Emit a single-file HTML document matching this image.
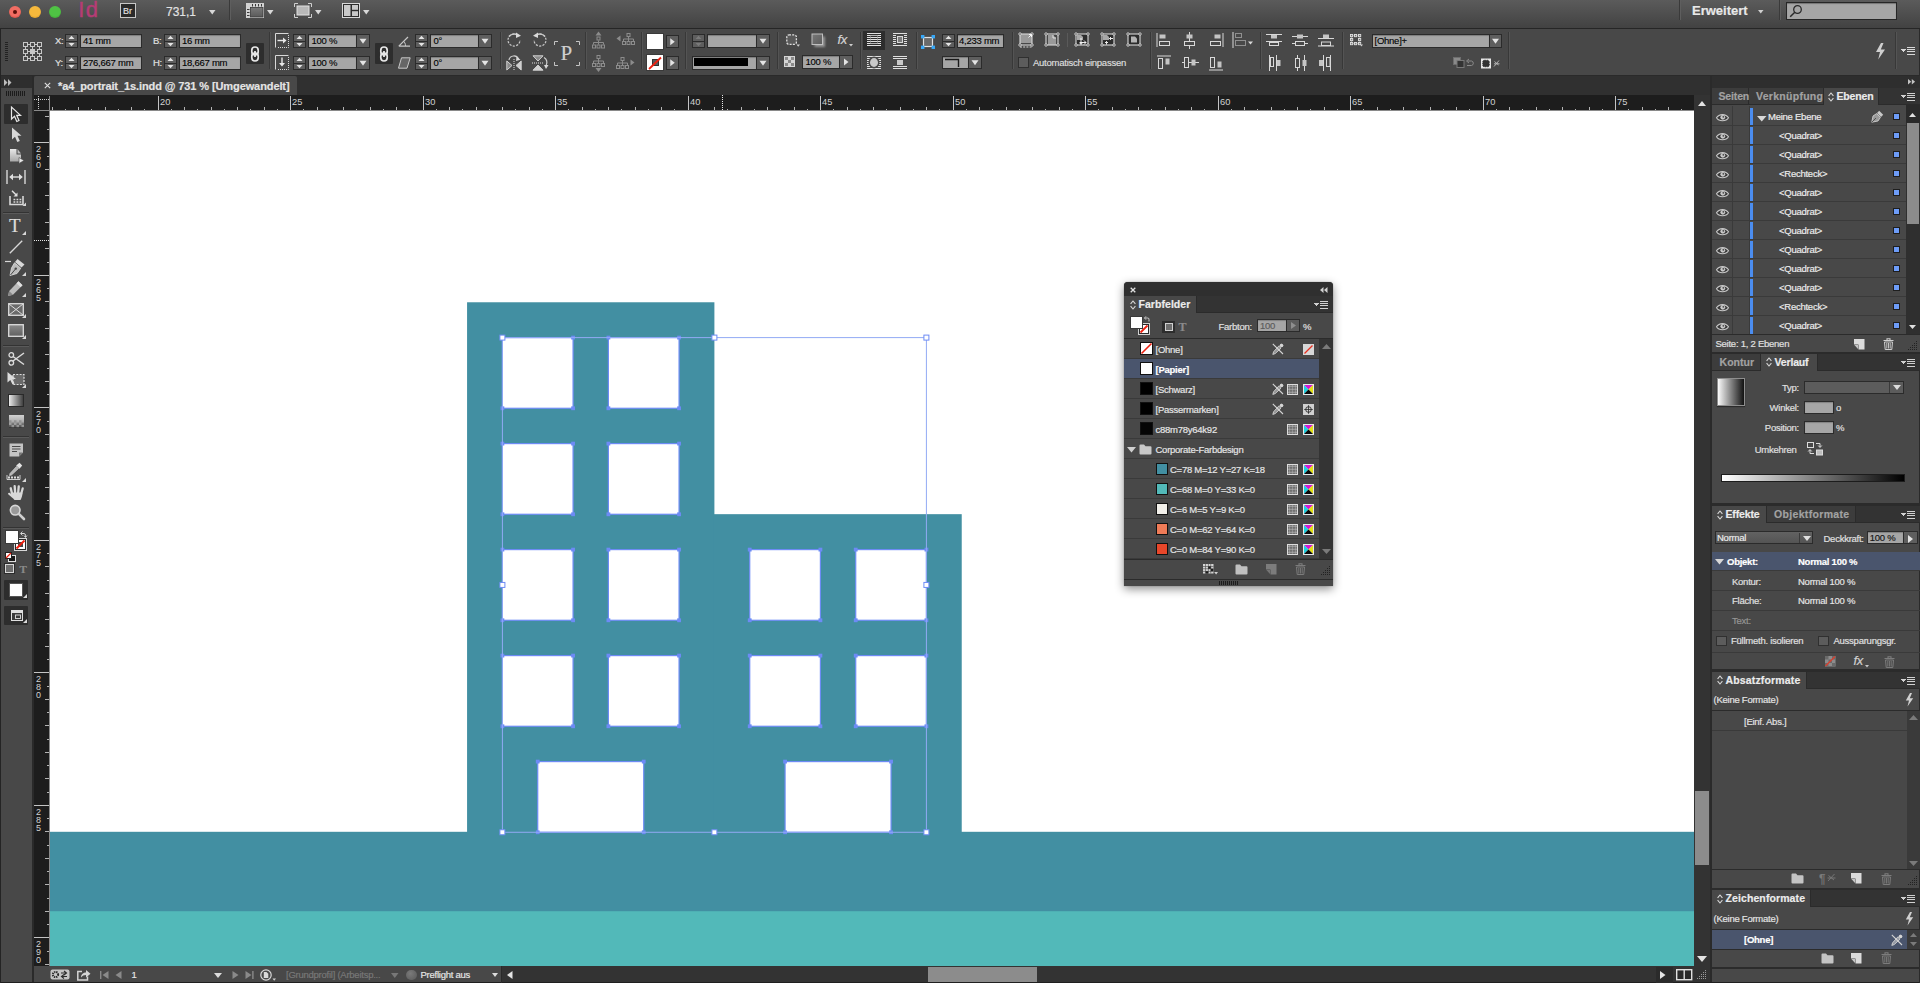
<!DOCTYPE html><html><head><meta charset="utf-8"><title>InDesign</title><style>
*{box-sizing:border-box;margin:0;padding:0}
html,body{width:1920px;height:983px;overflow:hidden;background:#484848}
body{position:relative;font-family:"Liberation Sans",sans-serif;font-size:10px;color:#dcdcdc}
div,svg{position:absolute}
.t{white-space:nowrap;-webkit-text-stroke:0.18px currentColor}
svg{overflow:visible}
</style></head><body><div style="left:0px;top:0px;width:1920px;height:28px;background:linear-gradient(#5b5b5b,#424242);"></div>
<div style="left:0px;top:28px;width:1920px;height:1px;background:#262626;"></div>
<div style="left:0px;top:29px;width:1920px;height:46px;background:#484848;"></div>
<div style="left:0px;top:75px;width:1920px;height:1px;background:#2a2a2a;"></div>
<div style="left:0px;top:76px;width:1920px;height:19px;background:#303030;"></div>
<div style="left:34px;top:76px;width:263px;height:19px;background:#484848;border-radius:2px 2px 0 0;"></div>
<div style="left:0px;top:76px;width:32px;height:12px;background:#2e2e2e;"></div>
<div style="left:0px;top:88px;width:32px;height:895px;background:#484848;"></div>
<div style="left:32px;top:76px;width:2px;height:907px;background:#2a2a2a;"></div>
<div style="left:50px;top:111px;width:1644px;height:855px;background:#fff;"></div><svg style="left:0;top:0" width="1920" height="983" viewBox="0 0 1920 983" shape-rendering="auto"><rect x="50" y="831.8" width="1644" height="134.2" fill="#428fa2"/><rect x="50" y="911.2" width="1644" height="54.8" fill="#52b9b9"/><rect x="467.07" y="302.27" width="247.33" height="530.73" fill="#428fa2"/><rect x="713.40" y="514.17" width="248.33" height="318.83" fill="#428fa2"/><rect x="502.40" y="337.60" width="70.67" height="70.67" fill="#fff" stroke="#6d8bf5" stroke-width="1.2"/><rect x="500.50" y="335.70" width="3.8" height="3.8" fill="#6d8bf5"/><rect x="571.17" y="335.70" width="3.8" height="3.8" fill="#6d8bf5"/><rect x="500.50" y="406.37" width="3.8" height="3.8" fill="#6d8bf5"/><rect x="571.17" y="406.37" width="3.8" height="3.8" fill="#6d8bf5"/><rect x="608.40" y="337.60" width="70.67" height="70.67" fill="#fff" stroke="#6d8bf5" stroke-width="1.2"/><rect x="606.50" y="335.70" width="3.8" height="3.8" fill="#6d8bf5"/><rect x="677.17" y="335.70" width="3.8" height="3.8" fill="#6d8bf5"/><rect x="606.50" y="406.37" width="3.8" height="3.8" fill="#6d8bf5"/><rect x="677.17" y="406.37" width="3.8" height="3.8" fill="#6d8bf5"/><rect x="502.40" y="443.60" width="70.67" height="70.67" fill="#fff" stroke="#6d8bf5" stroke-width="1.2"/><rect x="500.50" y="441.70" width="3.8" height="3.8" fill="#6d8bf5"/><rect x="571.17" y="441.70" width="3.8" height="3.8" fill="#6d8bf5"/><rect x="500.50" y="512.37" width="3.8" height="3.8" fill="#6d8bf5"/><rect x="571.17" y="512.37" width="3.8" height="3.8" fill="#6d8bf5"/><rect x="608.40" y="443.60" width="70.67" height="70.67" fill="#fff" stroke="#6d8bf5" stroke-width="1.2"/><rect x="606.50" y="441.70" width="3.8" height="3.8" fill="#6d8bf5"/><rect x="677.17" y="441.70" width="3.8" height="3.8" fill="#6d8bf5"/><rect x="606.50" y="512.37" width="3.8" height="3.8" fill="#6d8bf5"/><rect x="677.17" y="512.37" width="3.8" height="3.8" fill="#6d8bf5"/><rect x="502.40" y="549.60" width="70.67" height="70.67" fill="#fff" stroke="#6d8bf5" stroke-width="1.2"/><rect x="500.50" y="547.70" width="3.8" height="3.8" fill="#6d8bf5"/><rect x="571.17" y="547.70" width="3.8" height="3.8" fill="#6d8bf5"/><rect x="500.50" y="618.37" width="3.8" height="3.8" fill="#6d8bf5"/><rect x="571.17" y="618.37" width="3.8" height="3.8" fill="#6d8bf5"/><rect x="608.40" y="549.60" width="70.67" height="70.67" fill="#fff" stroke="#6d8bf5" stroke-width="1.2"/><rect x="606.50" y="547.70" width="3.8" height="3.8" fill="#6d8bf5"/><rect x="677.17" y="547.70" width="3.8" height="3.8" fill="#6d8bf5"/><rect x="606.50" y="618.37" width="3.8" height="3.8" fill="#6d8bf5"/><rect x="677.17" y="618.37" width="3.8" height="3.8" fill="#6d8bf5"/><rect x="502.40" y="655.60" width="70.67" height="70.67" fill="#fff" stroke="#6d8bf5" stroke-width="1.2"/><rect x="500.50" y="653.70" width="3.8" height="3.8" fill="#6d8bf5"/><rect x="571.17" y="653.70" width="3.8" height="3.8" fill="#6d8bf5"/><rect x="500.50" y="724.37" width="3.8" height="3.8" fill="#6d8bf5"/><rect x="571.17" y="724.37" width="3.8" height="3.8" fill="#6d8bf5"/><rect x="608.40" y="655.60" width="70.67" height="70.67" fill="#fff" stroke="#6d8bf5" stroke-width="1.2"/><rect x="606.50" y="653.70" width="3.8" height="3.8" fill="#6d8bf5"/><rect x="677.17" y="653.70" width="3.8" height="3.8" fill="#6d8bf5"/><rect x="606.50" y="724.37" width="3.8" height="3.8" fill="#6d8bf5"/><rect x="677.17" y="724.37" width="3.8" height="3.8" fill="#6d8bf5"/><rect x="749.73" y="549.60" width="70.67" height="70.67" fill="#fff" stroke="#6d8bf5" stroke-width="1.2"/><rect x="747.83" y="547.70" width="3.8" height="3.8" fill="#6d8bf5"/><rect x="818.50" y="547.70" width="3.8" height="3.8" fill="#6d8bf5"/><rect x="747.83" y="618.37" width="3.8" height="3.8" fill="#6d8bf5"/><rect x="818.50" y="618.37" width="3.8" height="3.8" fill="#6d8bf5"/><rect x="855.73" y="549.60" width="70.67" height="70.67" fill="#fff" stroke="#6d8bf5" stroke-width="1.2"/><rect x="853.83" y="547.70" width="3.8" height="3.8" fill="#6d8bf5"/><rect x="924.50" y="547.70" width="3.8" height="3.8" fill="#6d8bf5"/><rect x="853.83" y="618.37" width="3.8" height="3.8" fill="#6d8bf5"/><rect x="924.50" y="618.37" width="3.8" height="3.8" fill="#6d8bf5"/><rect x="749.73" y="655.60" width="70.67" height="70.67" fill="#fff" stroke="#6d8bf5" stroke-width="1.2"/><rect x="747.83" y="653.70" width="3.8" height="3.8" fill="#6d8bf5"/><rect x="818.50" y="653.70" width="3.8" height="3.8" fill="#6d8bf5"/><rect x="747.83" y="724.37" width="3.8" height="3.8" fill="#6d8bf5"/><rect x="818.50" y="724.37" width="3.8" height="3.8" fill="#6d8bf5"/><rect x="855.73" y="655.60" width="70.67" height="70.67" fill="#fff" stroke="#6d8bf5" stroke-width="1.2"/><rect x="853.83" y="653.70" width="3.8" height="3.8" fill="#6d8bf5"/><rect x="924.50" y="653.70" width="3.8" height="3.8" fill="#6d8bf5"/><rect x="853.83" y="724.37" width="3.8" height="3.8" fill="#6d8bf5"/><rect x="924.50" y="724.37" width="3.8" height="3.8" fill="#6d8bf5"/><rect x="537.73" y="761.60" width="106.00" height="70.67" fill="#fff" stroke="#6d8bf5" stroke-width="1.2"/><rect x="535.83" y="759.70" width="3.8" height="3.8" fill="#6d8bf5"/><rect x="641.83" y="759.70" width="3.8" height="3.8" fill="#6d8bf5"/><rect x="535.83" y="830.37" width="3.8" height="3.8" fill="#6d8bf5"/><rect x="641.83" y="830.37" width="3.8" height="3.8" fill="#6d8bf5"/><rect x="785.07" y="761.60" width="106.00" height="70.67" fill="#fff" stroke="#6d8bf5" stroke-width="1.2"/><rect x="783.17" y="759.70" width="3.8" height="3.8" fill="#6d8bf5"/><rect x="889.17" y="759.70" width="3.8" height="3.8" fill="#6d8bf5"/><rect x="783.17" y="830.37" width="3.8" height="3.8" fill="#6d8bf5"/><rect x="889.17" y="830.37" width="3.8" height="3.8" fill="#6d8bf5"/><rect x="502.40" y="337.60" width="424.00" height="494.67" fill="none" stroke="#92aaf4" stroke-width="1"/><rect x="499.90" y="335.10" width="5" height="5" fill="#fff" stroke="#6d8bf5" stroke-width="1"/><rect x="499.90" y="582.43" width="5" height="5" fill="#fff" stroke="#6d8bf5" stroke-width="1"/><rect x="499.90" y="829.77" width="5" height="5" fill="#fff" stroke="#6d8bf5" stroke-width="1"/><rect x="711.90" y="335.10" width="5" height="5" fill="#fff" stroke="#6d8bf5" stroke-width="1"/><rect x="711.90" y="829.77" width="5" height="5" fill="#fff" stroke="#6d8bf5" stroke-width="1"/><rect x="923.90" y="335.10" width="5" height="5" fill="#fff" stroke="#6d8bf5" stroke-width="1"/><rect x="923.90" y="582.43" width="5" height="5" fill="#fff" stroke="#6d8bf5" stroke-width="1"/><rect x="923.90" y="829.77" width="5" height="5" fill="#fff" stroke="#6d8bf5" stroke-width="1"/></svg>
<div style="left:34px;top:95px;width:1660px;height:16px;background:#1d1d1d;"></div><div style="left:34px;top:111px;width:16px;height:855px;background:#1d1d1d;"></div><svg style="left:0;top:0" width="1920" height="983" viewBox="0 0 1920 983" shape-rendering="crispEdges"><rect x="51.5" y="107" width="1" height="4" fill="#b4b4b4"/><rect x="64.5" y="109" width="1" height="2" fill="#b4b4b4"/><rect x="77.5" y="107" width="1" height="4" fill="#b4b4b4"/><rect x="90.5" y="109" width="1" height="2" fill="#b4b4b4"/><rect x="104.5" y="107" width="1" height="4" fill="#b4b4b4"/><rect x="117.5" y="109" width="1" height="2" fill="#b4b4b4"/><rect x="130.5" y="107" width="1" height="4" fill="#b4b4b4"/><rect x="143.5" y="109" width="1" height="2" fill="#b4b4b4"/><rect x="157.5" y="96" width="1" height="15" fill="#c4c4c4"/><text x="160" y="104.8" font-size="9.3" fill="#d2d2d2" font-family='"Liberation Sans", sans-serif'>20</text><rect x="170.5" y="109" width="1" height="2" fill="#b4b4b4"/><rect x="183.5" y="107" width="1" height="4" fill="#b4b4b4"/><rect x="196.5" y="109" width="1" height="2" fill="#b4b4b4"/><rect x="210.5" y="107" width="1" height="4" fill="#b4b4b4"/><rect x="223.5" y="109" width="1" height="2" fill="#b4b4b4"/><rect x="236.5" y="107" width="1" height="4" fill="#b4b4b4"/><rect x="249.5" y="109" width="1" height="2" fill="#b4b4b4"/><rect x="263.5" y="107" width="1" height="4" fill="#b4b4b4"/><rect x="276.5" y="109" width="1" height="2" fill="#b4b4b4"/><rect x="289.5" y="96" width="1" height="15" fill="#c4c4c4"/><text x="292" y="104.8" font-size="9.3" fill="#d2d2d2" font-family='"Liberation Sans", sans-serif'>25</text><rect x="302.5" y="109" width="1" height="2" fill="#b4b4b4"/><rect x="316.5" y="107" width="1" height="4" fill="#b4b4b4"/><rect x="329.5" y="109" width="1" height="2" fill="#b4b4b4"/><rect x="342.5" y="107" width="1" height="4" fill="#b4b4b4"/><rect x="355.5" y="109" width="1" height="2" fill="#b4b4b4"/><rect x="369.5" y="107" width="1" height="4" fill="#b4b4b4"/><rect x="382.5" y="109" width="1" height="2" fill="#b4b4b4"/><rect x="395.5" y="107" width="1" height="4" fill="#b4b4b4"/><rect x="408.5" y="109" width="1" height="2" fill="#b4b4b4"/><rect x="422.5" y="96" width="1" height="15" fill="#c4c4c4"/><text x="425" y="104.8" font-size="9.3" fill="#d2d2d2" font-family='"Liberation Sans", sans-serif'>30</text><rect x="435.5" y="109" width="1" height="2" fill="#b4b4b4"/><rect x="448.5" y="107" width="1" height="4" fill="#b4b4b4"/><rect x="461.5" y="109" width="1" height="2" fill="#b4b4b4"/><rect x="475.5" y="107" width="1" height="4" fill="#b4b4b4"/><rect x="488.5" y="109" width="1" height="2" fill="#b4b4b4"/><rect x="501.5" y="107" width="1" height="4" fill="#b4b4b4"/><rect x="514.5" y="109" width="1" height="2" fill="#b4b4b4"/><rect x="528.5" y="107" width="1" height="4" fill="#b4b4b4"/><rect x="541.5" y="109" width="1" height="2" fill="#b4b4b4"/><rect x="554.5" y="96" width="1" height="15" fill="#c4c4c4"/><text x="557" y="104.8" font-size="9.3" fill="#d2d2d2" font-family='"Liberation Sans", sans-serif'>35</text><rect x="567.5" y="109" width="1" height="2" fill="#b4b4b4"/><rect x="581.5" y="107" width="1" height="4" fill="#b4b4b4"/><rect x="594.5" y="109" width="1" height="2" fill="#b4b4b4"/><rect x="607.5" y="107" width="1" height="4" fill="#b4b4b4"/><rect x="620.5" y="109" width="1" height="2" fill="#b4b4b4"/><rect x="634.5" y="107" width="1" height="4" fill="#b4b4b4"/><rect x="647.5" y="109" width="1" height="2" fill="#b4b4b4"/><rect x="660.5" y="107" width="1" height="4" fill="#b4b4b4"/><rect x="673.5" y="109" width="1" height="2" fill="#b4b4b4"/><rect x="687.5" y="96" width="1" height="15" fill="#c4c4c4"/><text x="690" y="104.8" font-size="9.3" fill="#d2d2d2" font-family='"Liberation Sans", sans-serif'>40</text><rect x="700.5" y="109" width="1" height="2" fill="#b4b4b4"/><rect x="713.5" y="107" width="1" height="4" fill="#b4b4b4"/><rect x="726.5" y="109" width="1" height="2" fill="#b4b4b4"/><rect x="740.5" y="107" width="1" height="4" fill="#b4b4b4"/><rect x="753.5" y="109" width="1" height="2" fill="#b4b4b4"/><rect x="766.5" y="107" width="1" height="4" fill="#b4b4b4"/><rect x="779.5" y="109" width="1" height="2" fill="#b4b4b4"/><rect x="793.5" y="107" width="1" height="4" fill="#b4b4b4"/><rect x="806.5" y="109" width="1" height="2" fill="#b4b4b4"/><rect x="819.5" y="96" width="1" height="15" fill="#c4c4c4"/><text x="822" y="104.8" font-size="9.3" fill="#d2d2d2" font-family='"Liberation Sans", sans-serif'>45</text><rect x="832.5" y="109" width="1" height="2" fill="#b4b4b4"/><rect x="846.5" y="107" width="1" height="4" fill="#b4b4b4"/><rect x="859.5" y="109" width="1" height="2" fill="#b4b4b4"/><rect x="872.5" y="107" width="1" height="4" fill="#b4b4b4"/><rect x="885.5" y="109" width="1" height="2" fill="#b4b4b4"/><rect x="899.5" y="107" width="1" height="4" fill="#b4b4b4"/><rect x="912.5" y="109" width="1" height="2" fill="#b4b4b4"/><rect x="925.5" y="107" width="1" height="4" fill="#b4b4b4"/><rect x="938.5" y="109" width="1" height="2" fill="#b4b4b4"/><rect x="952.5" y="96" width="1" height="15" fill="#c4c4c4"/><text x="955" y="104.8" font-size="9.3" fill="#d2d2d2" font-family='"Liberation Sans", sans-serif'>50</text><rect x="965.5" y="109" width="1" height="2" fill="#b4b4b4"/><rect x="978.5" y="107" width="1" height="4" fill="#b4b4b4"/><rect x="991.5" y="109" width="1" height="2" fill="#b4b4b4"/><rect x="1005.5" y="107" width="1" height="4" fill="#b4b4b4"/><rect x="1018.5" y="109" width="1" height="2" fill="#b4b4b4"/><rect x="1031.5" y="107" width="1" height="4" fill="#b4b4b4"/><rect x="1044.5" y="109" width="1" height="2" fill="#b4b4b4"/><rect x="1058.5" y="107" width="1" height="4" fill="#b4b4b4"/><rect x="1071.5" y="109" width="1" height="2" fill="#b4b4b4"/><rect x="1084.5" y="96" width="1" height="15" fill="#c4c4c4"/><text x="1087" y="104.8" font-size="9.3" fill="#d2d2d2" font-family='"Liberation Sans", sans-serif'>55</text><rect x="1097.5" y="109" width="1" height="2" fill="#b4b4b4"/><rect x="1111.5" y="107" width="1" height="4" fill="#b4b4b4"/><rect x="1124.5" y="109" width="1" height="2" fill="#b4b4b4"/><rect x="1137.5" y="107" width="1" height="4" fill="#b4b4b4"/><rect x="1150.5" y="109" width="1" height="2" fill="#b4b4b4"/><rect x="1164.5" y="107" width="1" height="4" fill="#b4b4b4"/><rect x="1177.5" y="109" width="1" height="2" fill="#b4b4b4"/><rect x="1190.5" y="107" width="1" height="4" fill="#b4b4b4"/><rect x="1203.5" y="109" width="1" height="2" fill="#b4b4b4"/><rect x="1217.5" y="96" width="1" height="15" fill="#c4c4c4"/><text x="1220" y="104.8" font-size="9.3" fill="#d2d2d2" font-family='"Liberation Sans", sans-serif'>60</text><rect x="1230.5" y="109" width="1" height="2" fill="#b4b4b4"/><rect x="1243.5" y="107" width="1" height="4" fill="#b4b4b4"/><rect x="1256.5" y="109" width="1" height="2" fill="#b4b4b4"/><rect x="1270.5" y="107" width="1" height="4" fill="#b4b4b4"/><rect x="1283.5" y="109" width="1" height="2" fill="#b4b4b4"/><rect x="1296.5" y="107" width="1" height="4" fill="#b4b4b4"/><rect x="1309.5" y="109" width="1" height="2" fill="#b4b4b4"/><rect x="1323.5" y="107" width="1" height="4" fill="#b4b4b4"/><rect x="1336.5" y="109" width="1" height="2" fill="#b4b4b4"/><rect x="1349.5" y="96" width="1" height="15" fill="#c4c4c4"/><text x="1352" y="104.8" font-size="9.3" fill="#d2d2d2" font-family='"Liberation Sans", sans-serif'>65</text><rect x="1362.5" y="109" width="1" height="2" fill="#b4b4b4"/><rect x="1376.5" y="107" width="1" height="4" fill="#b4b4b4"/><rect x="1389.5" y="109" width="1" height="2" fill="#b4b4b4"/><rect x="1402.5" y="107" width="1" height="4" fill="#b4b4b4"/><rect x="1415.5" y="109" width="1" height="2" fill="#b4b4b4"/><rect x="1429.5" y="107" width="1" height="4" fill="#b4b4b4"/><rect x="1442.5" y="109" width="1" height="2" fill="#b4b4b4"/><rect x="1455.5" y="107" width="1" height="4" fill="#b4b4b4"/><rect x="1468.5" y="109" width="1" height="2" fill="#b4b4b4"/><rect x="1482.5" y="96" width="1" height="15" fill="#c4c4c4"/><text x="1485" y="104.8" font-size="9.3" fill="#d2d2d2" font-family='"Liberation Sans", sans-serif'>70</text><rect x="1495.5" y="109" width="1" height="2" fill="#b4b4b4"/><rect x="1508.5" y="107" width="1" height="4" fill="#b4b4b4"/><rect x="1521.5" y="109" width="1" height="2" fill="#b4b4b4"/><rect x="1535.5" y="107" width="1" height="4" fill="#b4b4b4"/><rect x="1548.5" y="109" width="1" height="2" fill="#b4b4b4"/><rect x="1561.5" y="107" width="1" height="4" fill="#b4b4b4"/><rect x="1574.5" y="109" width="1" height="2" fill="#b4b4b4"/><rect x="1588.5" y="107" width="1" height="4" fill="#b4b4b4"/><rect x="1601.5" y="109" width="1" height="2" fill="#b4b4b4"/><rect x="1614.5" y="96" width="1" height="15" fill="#c4c4c4"/><text x="1617" y="104.8" font-size="9.3" fill="#d2d2d2" font-family='"Liberation Sans", sans-serif'>75</text><rect x="1627.5" y="109" width="1" height="2" fill="#b4b4b4"/><rect x="1641.5" y="107" width="1" height="4" fill="#b4b4b4"/><rect x="1654.5" y="109" width="1" height="2" fill="#b4b4b4"/><rect x="1667.5" y="107" width="1" height="4" fill="#b4b4b4"/><rect x="1680.5" y="109" width="1" height="2" fill="#b4b4b4"/><rect x="45" y="115.5" width="5" height="1" fill="#b4b4b4"/><rect x="47" y="128.5" width="3" height="1" fill="#b4b4b4"/><rect x="34" y="141.5" width="16" height="1" fill="#c4c4c4"/><text x="36" y="151.5" font-size="9" fill="#d2d2d2" font-family='"Liberation Sans", sans-serif'>2</text><text x="36" y="159.6" font-size="9" fill="#d2d2d2" font-family='"Liberation Sans", sans-serif'>6</text><text x="36" y="167.7" font-size="9" fill="#d2d2d2" font-family='"Liberation Sans", sans-serif'>0</text><rect x="47" y="155.5" width="3" height="1" fill="#b4b4b4"/><rect x="45" y="168.5" width="5" height="1" fill="#b4b4b4"/><rect x="47" y="181.5" width="3" height="1" fill="#b4b4b4"/><rect x="45" y="194.5" width="5" height="1" fill="#b4b4b4"/><rect x="47" y="208.5" width="3" height="1" fill="#b4b4b4"/><rect x="45" y="221.5" width="5" height="1" fill="#b4b4b4"/><rect x="47" y="234.5" width="3" height="1" fill="#b4b4b4"/><rect x="45" y="247.5" width="5" height="1" fill="#b4b4b4"/><rect x="47" y="261.5" width="3" height="1" fill="#b4b4b4"/><rect x="34" y="274.5" width="16" height="1" fill="#c4c4c4"/><text x="36" y="284.5" font-size="9" fill="#d2d2d2" font-family='"Liberation Sans", sans-serif'>2</text><text x="36" y="292.6" font-size="9" fill="#d2d2d2" font-family='"Liberation Sans", sans-serif'>6</text><text x="36" y="300.7" font-size="9" fill="#d2d2d2" font-family='"Liberation Sans", sans-serif'>5</text><rect x="47" y="287.5" width="3" height="1" fill="#b4b4b4"/><rect x="45" y="300.5" width="5" height="1" fill="#b4b4b4"/><rect x="47" y="314.5" width="3" height="1" fill="#b4b4b4"/><rect x="45" y="327.5" width="5" height="1" fill="#b4b4b4"/><rect x="47" y="340.5" width="3" height="1" fill="#b4b4b4"/><rect x="45" y="353.5" width="5" height="1" fill="#b4b4b4"/><rect x="47" y="367.5" width="3" height="1" fill="#b4b4b4"/><rect x="45" y="380.5" width="5" height="1" fill="#b4b4b4"/><rect x="47" y="393.5" width="3" height="1" fill="#b4b4b4"/><rect x="34" y="406.5" width="16" height="1" fill="#c4c4c4"/><text x="36" y="416.5" font-size="9" fill="#d2d2d2" font-family='"Liberation Sans", sans-serif'>2</text><text x="36" y="424.6" font-size="9" fill="#d2d2d2" font-family='"Liberation Sans", sans-serif'>7</text><text x="36" y="432.7" font-size="9" fill="#d2d2d2" font-family='"Liberation Sans", sans-serif'>0</text><rect x="47" y="420.5" width="3" height="1" fill="#b4b4b4"/><rect x="45" y="433.5" width="5" height="1" fill="#b4b4b4"/><rect x="47" y="446.5" width="3" height="1" fill="#b4b4b4"/><rect x="45" y="459.5" width="5" height="1" fill="#b4b4b4"/><rect x="47" y="473.5" width="3" height="1" fill="#b4b4b4"/><rect x="45" y="486.5" width="5" height="1" fill="#b4b4b4"/><rect x="47" y="499.5" width="3" height="1" fill="#b4b4b4"/><rect x="45" y="512.5" width="5" height="1" fill="#b4b4b4"/><rect x="47" y="526.5" width="3" height="1" fill="#b4b4b4"/><rect x="34" y="539.5" width="16" height="1" fill="#c4c4c4"/><text x="36" y="549.5" font-size="9" fill="#d2d2d2" font-family='"Liberation Sans", sans-serif'>2</text><text x="36" y="557.6" font-size="9" fill="#d2d2d2" font-family='"Liberation Sans", sans-serif'>7</text><text x="36" y="565.7" font-size="9" fill="#d2d2d2" font-family='"Liberation Sans", sans-serif'>5</text><rect x="47" y="552.5" width="3" height="1" fill="#b4b4b4"/><rect x="45" y="565.5" width="5" height="1" fill="#b4b4b4"/><rect x="47" y="579.5" width="3" height="1" fill="#b4b4b4"/><rect x="45" y="592.5" width="5" height="1" fill="#b4b4b4"/><rect x="47" y="605.5" width="3" height="1" fill="#b4b4b4"/><rect x="45" y="618.5" width="5" height="1" fill="#b4b4b4"/><rect x="47" y="632.5" width="3" height="1" fill="#b4b4b4"/><rect x="45" y="645.5" width="5" height="1" fill="#b4b4b4"/><rect x="47" y="658.5" width="3" height="1" fill="#b4b4b4"/><rect x="34" y="671.5" width="16" height="1" fill="#c4c4c4"/><text x="36" y="681.5" font-size="9" fill="#d2d2d2" font-family='"Liberation Sans", sans-serif'>2</text><text x="36" y="689.6" font-size="9" fill="#d2d2d2" font-family='"Liberation Sans", sans-serif'>8</text><text x="36" y="697.7" font-size="9" fill="#d2d2d2" font-family='"Liberation Sans", sans-serif'>0</text><rect x="47" y="685.5" width="3" height="1" fill="#b4b4b4"/><rect x="45" y="698.5" width="5" height="1" fill="#b4b4b4"/><rect x="47" y="711.5" width="3" height="1" fill="#b4b4b4"/><rect x="45" y="724.5" width="5" height="1" fill="#b4b4b4"/><rect x="47" y="738.5" width="3" height="1" fill="#b4b4b4"/><rect x="45" y="751.5" width="5" height="1" fill="#b4b4b4"/><rect x="47" y="764.5" width="3" height="1" fill="#b4b4b4"/><rect x="45" y="777.5" width="5" height="1" fill="#b4b4b4"/><rect x="47" y="791.5" width="3" height="1" fill="#b4b4b4"/><rect x="34" y="804.5" width="16" height="1" fill="#c4c4c4"/><text x="36" y="814.5" font-size="9" fill="#d2d2d2" font-family='"Liberation Sans", sans-serif'>2</text><text x="36" y="822.6" font-size="9" fill="#d2d2d2" font-family='"Liberation Sans", sans-serif'>8</text><text x="36" y="830.7" font-size="9" fill="#d2d2d2" font-family='"Liberation Sans", sans-serif'>5</text><rect x="47" y="817.5" width="3" height="1" fill="#b4b4b4"/><rect x="45" y="830.5" width="5" height="1" fill="#b4b4b4"/><rect x="47" y="844.5" width="3" height="1" fill="#b4b4b4"/><rect x="45" y="857.5" width="5" height="1" fill="#b4b4b4"/><rect x="47" y="870.5" width="3" height="1" fill="#b4b4b4"/><rect x="45" y="883.5" width="5" height="1" fill="#b4b4b4"/><rect x="47" y="897.5" width="3" height="1" fill="#b4b4b4"/><rect x="45" y="910.5" width="5" height="1" fill="#b4b4b4"/><rect x="47" y="923.5" width="3" height="1" fill="#b4b4b4"/><rect x="34" y="936.5" width="16" height="1" fill="#c4c4c4"/><text x="36" y="946.5" font-size="9" fill="#d2d2d2" font-family='"Liberation Sans", sans-serif'>2</text><text x="36" y="954.6" font-size="9" fill="#d2d2d2" font-family='"Liberation Sans", sans-serif'>9</text><text x="36" y="962.7" font-size="9" fill="#d2d2d2" font-family='"Liberation Sans", sans-serif'>0</text><rect x="47" y="950.5" width="3" height="1" fill="#b4b4b4"/><rect x="45" y="963.5" width="5" height="1" fill="#b4b4b4"/><rect x="49" y="96" width="1" height="870" fill="#8a8a8a"/><rect x="34" y="110" width="1660" height="1" fill="#8a8a8a"/><line x1="38.5" y1="96" x2="38.5" y2="110" stroke="#cfcfcf" stroke-width="1" stroke-dasharray="1 1"/><line x1="34" y1="99.5" x2="49" y2="99.5" stroke="#cfcfcf" stroke-width="1" stroke-dasharray="1 1"/><line x1="722.5" y1="95" x2="722.5" y2="111" stroke="#e8e8e8" stroke-width="1" stroke-dasharray="1 1"/><line x1="34" y1="240.5" x2="50" y2="240.5" stroke="#e8e8e8" stroke-width="1" stroke-dasharray="1 1"/></svg>
<div style="left:1694px;top:95px;width:16px;height:871px;background:#333;"></div>
<div style="left:1710px;top:76px;width:2px;height:907px;background:#2a2a2a;"></div>
<div style="left:1712px;top:76px;width:208px;height:907px;background:#484848;"></div>
<div style="left:34px;top:966px;width:1676px;height:17px;background:#333;"></div>
<div style="left:34px;top:966px;width:467px;height:17px;background:#484848;"></div>
<div style="left:0px;top:982px;width:1920px;height:1px;background:#1f1f1f;"></div>
<div style="left:0px;top:29px;width:1px;height:954px;background:#242424;"></div>
<div style="left:1919px;top:29px;width:1px;height:954px;background:#2a2a2a;"></div>
<div style="left:9px;top:6px;width:12px;height:12px;border-radius:50%;background:radial-gradient(circle at 50% 40%,#f26d63,#f26d63 55%,#b8342c);"></div><div style="left:29px;top:6px;width:12px;height:12px;border-radius:50%;background:radial-gradient(circle at 50% 40%,#f5b83c,#f5b83c 55%,#c98a1c);"></div><div style="left:49px;top:6px;width:12px;height:12px;border-radius:50%;background:radial-gradient(circle at 50% 40%,#4fc244,#4fc244 55%,#2f9629);"></div><div style="left:13px;top:10px;width:4px;height:4px;border-radius:50%;background:#5a0f0a;"></div><div class="t" style="left:78.2px;top:-1.1999999999999993px;line-height:22px;font-size:22px;color:#b53c75;letter-spacing:1.4px;-webkit-text-stroke:0.45px #b53c75;">Id</div><div style="left:120px;top:3px;width:16px;height:15px;background:#2a2a2a;border:1px solid #c8c8c8;"></div><div class="t" style="left:123px;top:4.5px;line-height:12px;font-size:9px;color:#e0e0e0;">Br</div><div class="t" style="left:166px;top:4.5px;line-height:14px;font-size:12px;color:#e2e2e2;">731,1</div><svg style="left:209px;top:9.5px;" width="6.5" height="4.5" viewBox="0 0 6.5 4.5"><path d="M0 0H6.5L3.25 4.5Z" fill="#d8d8d8"/></svg><div style="left:229px;top:0px;width:1px;height:20px;background:#3a3a3a;"></div><div style="left:230px;top:0px;width:1px;height:20px;background:#5e5e5e;"></div><svg style="left:246px;top:3px;" width="18" height="15" viewBox="0 0 18 15"><defs><linearGradient id="vo1" x1="0" y1="0" x2="0" y2="1"><stop offset="0" stop-color="#7a7a7a"/><stop offset="1" stop-color="#5a5a5a"/></linearGradient></defs><rect x="0" y="0" width="18" height="15" fill="#d2d2d2"/><rect x="4.5" y="4.5" width="12.5" height="9.5" fill="url(#vo1)" stroke="#3a3a3a" stroke-width="0.8"/><path d="M6.5 1v2.5M9.5 1v2.5M12.5 1v2.5M15.5 1v2.5M1 6.5h2.5M1 9.5h2.5M1 12.5h2.5" stroke="#3a3a3a" stroke-width="1"/></svg><svg style="left:266.5px;top:9.5px;" width="6.5" height="4.5" viewBox="0 0 6.5 4.5"><path d="M0 0H6.5L3.25 4.5Z" fill="#d8d8d8"/></svg><svg style="left:294px;top:3px;" width="18" height="15" viewBox="0 0 18 15"><rect x="3" y="3" width="12" height="9" fill="#b8b8b8" stroke="#e0e0e0" stroke-width="1"/><path d="M0.5 4V0.5H4M14 0.5H17.5V4M0.5 11V14.5H4M14 14.5H17.5V11" fill="none" stroke="#d0d0d0" stroke-width="1"/></svg><svg style="left:314.5px;top:9.5px;" width="6.5" height="4.5" viewBox="0 0 6.5 4.5"><path d="M0 0H6.5L3.25 4.5Z" fill="#d8d8d8"/></svg><svg style="left:342px;top:3px;" width="18" height="15" viewBox="0 0 18 15"><rect x="0.5" y="0.5" width="17" height="14" fill="#2c2c2c" stroke="#d8d8d8"/><rect x="2" y="2" width="6.5" height="11" fill="#c8c8c8"/><rect x="10" y="2" width="6" height="4.8" fill="#c8c8c8"/><rect x="10" y="8.2" width="6" height="4.8" fill="#c8c8c8"/></svg><svg style="left:362.5px;top:9.5px;" width="6.5" height="4.5" viewBox="0 0 6.5 4.5"><path d="M0 0H6.5L3.25 4.5Z" fill="#d8d8d8"/></svg><div style="left:1679px;top:0px;width:1px;height:20px;background:#3a3a3a;"></div><div style="left:1680px;top:0px;width:1px;height:20px;background:#5e5e5e;"></div><div class="t" style="left:1692px;top:3.5px;line-height:14px;font-size:13px;color:#e8e8e8;font-weight:bold;">Erweitert</div><svg style="left:1758px;top:9.5px;" width="5.5" height="3.5" viewBox="0 0 5.5 3.5"><path d="M0 0H5.5L2.75 3.5Z" fill="#d0d0d0"/></svg><div style="left:1779px;top:0px;width:1px;height:20px;background:#3a3a3a;"></div><div style="left:1780px;top:0px;width:1px;height:20px;background:#5e5e5e;"></div><div style="left:1786px;top:2px;width:111px;height:18px;background:#a6a6a6;border:1px solid #262626;box-shadow:inset 0 1px 1px rgba(0,0,0,.3);"></div><svg style="left:1789px;top:4px;" width="14" height="14" viewBox="0 0 14 14"><circle cx="8.5" cy="5.5" r="3.8" fill="none" stroke="#2a2a2a" stroke-width="1.3"/><path d="M5.8 8.2L1.2 12.8" stroke="#2a2a2a" stroke-width="1.5"/></svg><div style="left:5px;top:42px;width:3px;height:20px;background:repeating-linear-gradient(#222 0 1px,transparent 1px 2px);"></div><svg style="left:23px;top:42px;shape-rendering:crispEdges;" width="19" height="19" viewBox="0 0 19 19"><rect x="0.5" y="0.5" width="4" height="4" fill="none" stroke="#c8c8c8" stroke-width="1"/><rect x="0.5" y="7.5" width="4" height="4" fill="none" stroke="#c8c8c8" stroke-width="1"/><rect x="0.5" y="14.5" width="4" height="4" fill="none" stroke="#c8c8c8" stroke-width="1"/><rect x="7.5" y="0.5" width="4" height="4" fill="none" stroke="#c8c8c8" stroke-width="1"/><rect x="7.5" y="7.5" width="4" height="4" fill="#c8c8c8" stroke="#c8c8c8" stroke-width="1"/><rect x="7.5" y="14.5" width="4" height="4" fill="none" stroke="#c8c8c8" stroke-width="1"/><rect x="14.5" y="0.5" width="4" height="4" fill="none" stroke="#c8c8c8" stroke-width="1"/><rect x="14.5" y="7.5" width="4" height="4" fill="none" stroke="#c8c8c8" stroke-width="1"/><rect x="14.5" y="14.5" width="4" height="4" fill="none" stroke="#c8c8c8" stroke-width="1"/><path d="M5 2.5h2M12 2.5h2M5 16.5h2M12 16.5h2M2.5 5v2M2.5 12v2M16.5 5v2M16.5 12v2M5 9.5h2M12 9.5h2M9.5 5v2M9.5 12v2" stroke="#c8c8c8" stroke-width="1"/></svg><div class="t" style="left:55px;top:33.8px;line-height:14px;font-size:9.5px;color:#e0e0e0;letter-spacing:-0.25px;">X:</div><div class="t" style="left:55px;top:55.8px;line-height:14px;font-size:9.5px;color:#e0e0e0;letter-spacing:-0.25px;">Y:</div><div style="left:65px;top:34px;width:13px;height:14px;background:#5e5e5e;border:1px solid #2b2b2b;"></div><div style="left:66px;top:40.5px;width:11px;height:1px;background:#2b2b2b;"></div><svg style="left:65px;top:34px;" width="13" height="14" viewBox="0 0 13 14"><path d="M3.5 5.0 L6.5 1.7999999999999998 L9.5 5.0Z M3.5 9.0 L6.5 12.2 L9.5 9.0Z" fill="#e4e4e4"/></svg><div style="left:65px;top:56px;width:13px;height:14px;background:#5e5e5e;border:1px solid #2b2b2b;"></div><div style="left:66px;top:62.5px;width:11px;height:1px;background:#2b2b2b;"></div><svg style="left:65px;top:56px;" width="13" height="14" viewBox="0 0 13 14"><path d="M3.5 5.0 L6.5 1.7999999999999998 L9.5 5.0Z M3.5 9.0 L6.5 12.2 L9.5 9.0Z" fill="#e4e4e4"/></svg><div style="left:80px;top:34px;width:62px;height:14px;background:#a6a6a6;border:1px solid #2b2b2b;box-shadow:inset 0 1px 1px rgba(0,0,0,.25);"></div><div class="t" style="left:83px;top:34.2px;line-height:14px;font-size:9.5px;color:#000;letter-spacing:-0.25px;-webkit-text-stroke:0.12px #000;">41 mm</div><div style="left:80px;top:56px;width:62px;height:14px;background:#a6a6a6;border:1px solid #2b2b2b;box-shadow:inset 0 1px 1px rgba(0,0,0,.25);"></div><div class="t" style="left:83px;top:56.2px;line-height:14px;font-size:9.5px;color:#000;letter-spacing:-0.25px;-webkit-text-stroke:0.12px #000;">276,667 mm</div><div class="t" style="left:153px;top:33.8px;line-height:14px;font-size:9.5px;color:#e0e0e0;letter-spacing:-0.25px;">B:</div><div class="t" style="left:153px;top:55.8px;line-height:14px;font-size:9.5px;color:#e0e0e0;letter-spacing:-0.25px;">H:</div><div style="left:164px;top:34px;width:13px;height:14px;background:#5e5e5e;border:1px solid #2b2b2b;"></div><div style="left:165px;top:40.5px;width:11px;height:1px;background:#2b2b2b;"></div><svg style="left:164px;top:34px;" width="13" height="14" viewBox="0 0 13 14"><path d="M3.5 5.0 L6.5 1.7999999999999998 L9.5 5.0Z M3.5 9.0 L6.5 12.2 L9.5 9.0Z" fill="#e4e4e4"/></svg><div style="left:164px;top:56px;width:13px;height:14px;background:#5e5e5e;border:1px solid #2b2b2b;"></div><div style="left:165px;top:62.5px;width:11px;height:1px;background:#2b2b2b;"></div><svg style="left:164px;top:56px;" width="13" height="14" viewBox="0 0 13 14"><path d="M3.5 5.0 L6.5 1.7999999999999998 L9.5 5.0Z M3.5 9.0 L6.5 12.2 L9.5 9.0Z" fill="#e4e4e4"/></svg><div style="left:179px;top:34px;width:62px;height:14px;background:#a6a6a6;border:1px solid #2b2b2b;box-shadow:inset 0 1px 1px rgba(0,0,0,.25);"></div><div class="t" style="left:182px;top:34.2px;line-height:14px;font-size:9.5px;color:#000;letter-spacing:-0.25px;-webkit-text-stroke:0.12px #000;">16 mm</div><div style="left:179px;top:56px;width:62px;height:14px;background:#a6a6a6;border:1px solid #2b2b2b;box-shadow:inset 0 1px 1px rgba(0,0,0,.25);"></div><div class="t" style="left:182px;top:56.2px;line-height:14px;font-size:9.5px;color:#000;letter-spacing:-0.25px;-webkit-text-stroke:0.12px #000;">18,667 mm</div><div style="left:246px;top:42.5px;width:18px;height:21px;background:#2d2d2d;border-radius:1px;"></div><svg style="left:246px;top:42.5px;" width="18" height="21" viewBox="0 0 18 21"><rect x="5.8" y="4" width="6.4" height="8" rx="3.2" fill="none" stroke="#e6e6e6" stroke-width="1.7"/><rect x="5.8" y="10" width="6.4" height="8" rx="3.2" fill="none" stroke="#e6e6e6" stroke-width="1.7"/><rect x="8.1" y="8" width="1.8" height="6" fill="#e6e6e6"/></svg><div style="left:269px;top:32px;width:1px;height:37px;background:#383838;"></div><div style="left:270px;top:32px;width:1px;height:37px;background:#545454;"></div><svg style="left:275px;top:33px;" width="14" height="15" viewBox="0 0 14 15"><path d="M0.5 14.5V0.5H13.5" fill="none" stroke="#d8d8d8"/><path d="M13.5 2V14.5H2" fill="none" stroke="#d8d8d8" stroke-dasharray="1 1"/><path d="M2.5 7.5H9" stroke="#e8e8e8" stroke-width="1.4"/><path d="M8 4.5L11.5 7.5L8 10.5Z" fill="#e8e8e8"/></svg><svg style="left:275px;top:55px;" width="14" height="15" viewBox="0 0 14 15"><path d="M0.5 14.5V0.5H13.5" fill="none" stroke="#d8d8d8"/><path d="M13.5 2V14.5H2" fill="none" stroke="#d8d8d8" stroke-dasharray="1 1"/><path d="M7 2.5V9" stroke="#e8e8e8" stroke-width="1.4"/><path d="M4 8L7 11.5L10 8Z" fill="#e8e8e8"/></svg><div style="left:292.5px;top:34px;width:13px;height:14px;background:#5e5e5e;border:1px solid #2b2b2b;"></div><div style="left:293.5px;top:40.5px;width:11px;height:1px;background:#2b2b2b;"></div><svg style="left:292.5px;top:34px;" width="13" height="14" viewBox="0 0 13 14"><path d="M3.5 5.0 L6.5 1.7999999999999998 L9.5 5.0Z M3.5 9.0 L6.5 12.2 L9.5 9.0Z" fill="#e4e4e4"/></svg><div style="left:292.5px;top:56px;width:13px;height:14px;background:#5e5e5e;border:1px solid #2b2b2b;"></div><div style="left:293.5px;top:62.5px;width:11px;height:1px;background:#2b2b2b;"></div><svg style="left:292.5px;top:56px;" width="13" height="14" viewBox="0 0 13 14"><path d="M3.5 5.0 L6.5 1.7999999999999998 L9.5 5.0Z M3.5 9.0 L6.5 12.2 L9.5 9.0Z" fill="#e4e4e4"/></svg><div style="left:307.5px;top:34px;width:49px;height:14px;background:#a6a6a6;border:1px solid #2b2b2b;box-shadow:inset 0 1px 1px rgba(0,0,0,.25);"></div><div class="t" style="left:311.5px;top:34.2px;line-height:14px;font-size:9.5px;color:#000;letter-spacing:-0.25px;-webkit-text-stroke:0.12px #000;">100 %</div><div style="left:307.5px;top:56px;width:49px;height:14px;background:#a6a6a6;border:1px solid #2b2b2b;box-shadow:inset 0 1px 1px rgba(0,0,0,.25);"></div><div class="t" style="left:311.5px;top:56.2px;line-height:14px;font-size:9.5px;color:#000;letter-spacing:-0.25px;-webkit-text-stroke:0.12px #000;">100 %</div><div style="left:355.5px;top:34px;width:14px;height:14px;background:#5e5e5e;border:1px solid #2b2b2b;"></div><svg style="left:355.5px;top:34px;" width="14" height="14" viewBox="0 0 14 14"><path d="M3.5 4.8 L10.5 4.8 L7.0 9.8Z" fill="#e4e4e4"/></svg><div style="left:355.5px;top:56px;width:14px;height:14px;background:#5e5e5e;border:1px solid #2b2b2b;"></div><svg style="left:355.5px;top:56px;" width="14" height="14" viewBox="0 0 14 14"><path d="M3.5 4.8 L10.5 4.8 L7.0 9.8Z" fill="#e4e4e4"/></svg><div style="left:375px;top:42.5px;width:18px;height:21px;background:#2d2d2d;border-radius:1px;"></div><svg style="left:375px;top:42.5px;" width="18" height="21" viewBox="0 0 18 21"><rect x="5.8" y="4" width="6.4" height="8" rx="3.2" fill="none" stroke="#e6e6e6" stroke-width="1.7"/><rect x="5.8" y="10" width="6.4" height="8" rx="3.2" fill="none" stroke="#e6e6e6" stroke-width="1.7"/><rect x="8.1" y="8" width="1.8" height="6" fill="#e6e6e6"/></svg><svg style="left:398px;top:35px;" width="13" height="12" viewBox="0 0 13 12"><path d="M0.8 11.2H12M0.8 11.2L10 2" fill="none" stroke="#c8c8c8" stroke-width="1.2"/><path d="M7.5 11C7.5 8.5 6.5 7 5.5 6.2" fill="none" stroke="#c8c8c8" stroke-width="1"/></svg><svg style="left:398px;top:57px;" width="13" height="12" viewBox="0 0 13 12"><path d="M3.5 0.8H12.2L9 11.2H0.5Z" fill="#666" stroke="#c8c8c8" stroke-width="1"/></svg><div style="left:414.5px;top:34px;width:13px;height:14px;background:#5e5e5e;border:1px solid #2b2b2b;"></div><div style="left:415.5px;top:40.5px;width:11px;height:1px;background:#2b2b2b;"></div><svg style="left:414.5px;top:34px;" width="13" height="14" viewBox="0 0 13 14"><path d="M3.5 5.0 L6.5 1.7999999999999998 L9.5 5.0Z M3.5 9.0 L6.5 12.2 L9.5 9.0Z" fill="#e4e4e4"/></svg><div style="left:414.5px;top:56px;width:13px;height:14px;background:#5e5e5e;border:1px solid #2b2b2b;"></div><div style="left:415.5px;top:62.5px;width:11px;height:1px;background:#2b2b2b;"></div><svg style="left:414.5px;top:56px;" width="13" height="14" viewBox="0 0 13 14"><path d="M3.5 5.0 L6.5 1.7999999999999998 L9.5 5.0Z M3.5 9.0 L6.5 12.2 L9.5 9.0Z" fill="#e4e4e4"/></svg><div style="left:429.5px;top:34px;width:49px;height:14px;background:#a6a6a6;border:1px solid #2b2b2b;box-shadow:inset 0 1px 1px rgba(0,0,0,.25);"></div><div class="t" style="left:433.5px;top:34.2px;line-height:14px;font-size:9.5px;color:#000;letter-spacing:-0.25px;-webkit-text-stroke:0.12px #000;">0°</div><div style="left:429.5px;top:56px;width:49px;height:14px;background:#a6a6a6;border:1px solid #2b2b2b;box-shadow:inset 0 1px 1px rgba(0,0,0,.25);"></div><div class="t" style="left:433.5px;top:56.2px;line-height:14px;font-size:9.5px;color:#000;letter-spacing:-0.25px;-webkit-text-stroke:0.12px #000;">0°</div><div style="left:477.5px;top:34px;width:14px;height:14px;background:#5e5e5e;border:1px solid #2b2b2b;"></div><svg style="left:477.5px;top:34px;" width="14" height="14" viewBox="0 0 14 14"><path d="M3.5 4.8 L10.5 4.8 L7.0 9.8Z" fill="#e4e4e4"/></svg><div style="left:477.5px;top:56px;width:14px;height:14px;background:#5e5e5e;border:1px solid #2b2b2b;"></div><svg style="left:477.5px;top:56px;" width="14" height="14" viewBox="0 0 14 14"><path d="M3.5 4.8 L10.5 4.8 L7.0 9.8Z" fill="#e4e4e4"/></svg><div style="left:500px;top:32px;width:1px;height:37px;background:#383838;"></div><div style="left:501px;top:32px;width:1px;height:37px;background:#545454;"></div><svg style="left:506px;top:32px;" width="16" height="16" viewBox="0 0 16 16"><path d="M11.5 3.2A6 6 0 1 0 14 8" fill="none" stroke="#c8c8c8" stroke-width="1.2" stroke-dasharray="2.2 1.3"/><path d="M3 4.5A6 6 0 0 1 11.5 3.2" fill="none" stroke="#c8c8c8" stroke-width="1.3"/><path d="M10 0.5L15 3.8L10 6Z" fill="#d8d8d8"/></svg><svg style="left:532px;top:32px;" width="16" height="16" viewBox="0 0 16 16"><path d="M4.5 3.2A6 6 0 1 1 2 8" fill="none" stroke="#c8c8c8" stroke-width="1.2" stroke-dasharray="2.2 1.3"/><path d="M13 4.5A6 6 0 0 0 4.5 3.2" fill="none" stroke="#c8c8c8" stroke-width="1.3"/><path d="M6 0.5L1 3.8L6 6Z" fill="#d8d8d8"/></svg><svg style="left:506px;top:55px;" width="16" height="16" viewBox="0 0 16 16"><path d="M0.8 6V15L6 10.5Z" fill="#8a8a8a" stroke="#d0d0d0" stroke-width="1"/><path d="M15.2 6V15L10 10.5Z" fill="#d0d0d0" stroke="#d0d0d0" stroke-width="1"/><path d="M8 4V16" stroke="#e0e0e0" stroke-dasharray="1 1"/><path d="M3 5A5 5 0 0 1 12.5 4" fill="none" stroke="#d0d0d0" stroke-width="1.2"/><path d="M10.5 1.5L14.5 4.8L10 6Z" fill="#d8d8d8"/></svg><svg style="left:532px;top:55px;" width="17" height="16" viewBox="0 0 17 16"><path d="M1 0.8H11L6 6Z" fill="#8a8a8a" stroke="#d0d0d0" stroke-width="1"/><path d="M1 15.2H11L6 10Z" fill="#d0d0d0" stroke="#d0d0d0" stroke-width="1"/><path d="M0 8H12" stroke="#e0e0e0" stroke-dasharray="1 1"/><path d="M12 2.5A5.5 5.5 0 0 1 14.2 10" fill="none" stroke="#d0d0d0" stroke-width="1.2"/><path d="M12 10L16.5 10L14 14Z" fill="#d8d8d8"/></svg><svg style="left:554px;top:41px;" width="27" height="25" viewBox="0 0 27 25"><path d="M0.5 4V0.5H4M22 0.5H25.5V4M0.5 21V24.5H4M22 24.5H25.5V21" fill="none" stroke="#c4c4c4" stroke-width="1"/></svg><div class="t" style="left:560.5px;top:42.0px;line-height:22px;font-size:21px;color:#cfcfcf;font-family:'Liberation Serif',serif;">P</div><div style="left:585px;top:32px;width:1px;height:37px;background:#383838;"></div><div style="left:586px;top:32px;width:1px;height:37px;background:#545454;"></div><svg style="left:592px;top:31px;" width="13" height="17" viewBox="0 0 13 17"><path d="M3.5 4.5H9.5L6.5 0.5Z" fill="#8c8c8c"/><g transform="translate(0,5.5)"><rect x="5" y="0.5" width="3" height="3" fill="none" stroke="#8c8c8c"/><path d="M6.5 4v2M1.5 8V6h10v2M6.5 6v2" fill="none" stroke="#8c8c8c"/><rect x="0.5" y="8.5" width="3" height="3" fill="none" stroke="#8c8c8c"/><rect x="5" y="8.5" width="3" height="3" fill="none" stroke="#8c8c8c"/><rect x="9.5" y="8.5" width="3" height="3" fill="none" stroke="#8c8c8c"/></g></svg><svg style="left:592px;top:55px;" width="13" height="17" viewBox="0 0 13 17"><rect x="5" y="0.5" width="3" height="3" fill="none" stroke="#8c8c8c"/><path d="M6.5 4v2M1.5 8V6h10v2M6.5 6v2" fill="none" stroke="#8c8c8c"/><rect x="0.5" y="8.5" width="3" height="3" fill="none" stroke="#8c8c8c"/><rect x="5" y="8.5" width="3" height="3" fill="none" stroke="#8c8c8c"/><rect x="9.5" y="8.5" width="3" height="3" fill="none" stroke="#8c8c8c"/><path d="M3.5 13H9.5L6.5 17Z" fill="#8c8c8c"/></svg><svg style="left:616px;top:33px;" width="19" height="12" viewBox="0 0 19 12"><path d="M4.5 2.5V8.5L0.5 5.5Z" fill="#8c8c8c"/><g transform="translate(6,0)"><rect x="5" y="0.5" width="3" height="3" fill="none" stroke="#8c8c8c"/><path d="M6.5 4v2M1.5 8V6h10v2M6.5 6v2" fill="none" stroke="#8c8c8c"/><rect x="0.5" y="8.5" width="3" height="3" fill="none" stroke="#8c8c8c"/><rect x="5" y="8.5" width="3" height="3" fill="none" stroke="#8c8c8c"/><rect x="9.5" y="8.5" width="3" height="3" fill="none" stroke="#8c8c8c"/></g></svg><svg style="left:616px;top:57px;" width="19" height="12" viewBox="0 0 19 12"><rect x="5" y="0.5" width="3" height="3" fill="none" stroke="#8c8c8c"/><path d="M6.5 4v2M1.5 8V6h10v2M6.5 6v2" fill="none" stroke="#8c8c8c"/><rect x="0.5" y="8.5" width="3" height="3" fill="none" stroke="#8c8c8c"/><rect x="5" y="8.5" width="3" height="3" fill="none" stroke="#8c8c8c"/><rect x="9.5" y="8.5" width="3" height="3" fill="none" stroke="#8c8c8c"/><path d="M14.5 2.5V8.5L18.5 5.5Z" fill="#8c8c8c"/></svg><div style="left:641px;top:32px;width:1px;height:37px;background:#383838;"></div><div style="left:642px;top:32px;width:1px;height:37px;background:#545454;"></div><div style="left:647px;top:33.5px;width:16px;height:15.5px;background:#fff;box-shadow:0 0 0 1px #3a3a3a;"></div><div style="left:666px;top:34.5px;width:12.5px;height:13.5px;background:#5e5e5e;border:1px solid #2b2b2b;"></div><svg style="left:666px;top:34.5px;" width="12.5" height="13.5" viewBox="0 0 12.5 13.5"><path d="M4.25 3.25 L8.75 6.75 L4.25 10.25Z" fill="#e4e4e4"/></svg><div style="left:647px;top:54.5px;width:16px;height:15.5px;background:#fff;box-shadow:0 0 0 1px #3a3a3a;"></div><div style="left:651.5px;top:58.5px;width:7px;height:7px;background:#5a5a5a;border:1px solid #333;"></div><svg style="left:647px;top:54.5px;" width="16" height="16" viewBox="0 0 16 16"><path d="M2 14L14 2.5" stroke="#ee2010" stroke-width="1.8"/></svg><div style="left:666px;top:56px;width:12.5px;height:13.5px;background:#5e5e5e;border:1px solid #2b2b2b;"></div><svg style="left:666px;top:56px;" width="12.5" height="13.5" viewBox="0 0 12.5 13.5"><path d="M4.25 3.25 L8.75 6.75 L4.25 10.25Z" fill="#e4e4e4"/></svg><div style="left:685px;top:32px;width:1px;height:37px;background:#383838;"></div><div style="left:686px;top:32px;width:1px;height:37px;background:#545454;"></div><div style="left:691.5px;top:34px;width:13px;height:14px;background:#5e5e5e;border:1px solid #2b2b2b;"></div><div style="left:692.5px;top:40.5px;width:11px;height:1px;background:#2b2b2b;"></div><svg style="left:691.5px;top:34px;" width="13" height="14" viewBox="0 0 13 14"><path d="M3.5 5.0 L6.5 1.7999999999999998 L9.5 5.0Z M3.5 9.0 L6.5 12.2 L9.5 9.0Z" fill="#7a7a7a"/></svg><div style="left:706.5px;top:34px;width:50px;height:14px;background:#a6a6a6;border:1px solid #2b2b2b;box-shadow:inset 0 1px 1px rgba(0,0,0,.25);"></div><div style="left:755.5px;top:34px;width:14px;height:14px;background:#5e5e5e;border:1px solid #2b2b2b;"></div><svg style="left:755.5px;top:34px;" width="14" height="14" viewBox="0 0 14 14"><path d="M3.5 4.8 L10.5 4.8 L7.0 9.8Z" fill="#e4e4e4"/></svg><div style="left:691.5px;top:56px;width:65px;height:14px;background:#a6a6a6;border:1px solid #2b2b2b;box-shadow:inset 0 1px 1px rgba(0,0,0,.25);"></div><div style="left:694px;top:57.5px;width:54px;height:8px;background:#000;"></div><div style="left:755.5px;top:56px;width:14px;height:14px;background:#5e5e5e;border:1px solid #2b2b2b;"></div><svg style="left:755.5px;top:56px;" width="14" height="14" viewBox="0 0 14 14"><path d="M3.5 4.8 L10.5 4.8 L7.0 9.8Z" fill="#e4e4e4"/></svg><div style="left:777px;top:32px;width:1px;height:37px;background:#383838;"></div><div style="left:778px;top:32px;width:1px;height:37px;background:#545454;"></div><svg style="left:786px;top:34px;" width="14" height="13" viewBox="0 0 14 13"><rect x="0.8" y="0.8" width="9.6" height="9.6" rx="2.2" fill="#5a5a5a" stroke="#e0e0e0" stroke-width="1.3" stroke-dasharray="2 1.2"/><path d="M10.5 10.5H14L12.2 12.8Z" fill="#d0d0d0"/></svg><svg style="left:811px;top:33px;" width="15" height="15" viewBox="0 0 15 15"><defs><filter id="bl1" x="-30%" y="-30%" width="160%" height="160%"><feGaussianBlur stdDeviation="0.9"/></filter><linearGradient id="sh1" x1="0" y1="0" x2="1" y2="1"><stop offset="0" stop-color="#787878"/><stop offset="1" stop-color="#5c5c5c"/></linearGradient></defs><rect x="3.5" y="3.5" width="10.5" height="10.5" fill="#b0b0b0" opacity="0.75" filter="url(#bl1)"/><rect x="1" y="1" width="10.5" height="10.5" fill="url(#sh1)" stroke="#c0c0c0" stroke-width="1"/></svg><div class="t" style="left:837.5px;top:32.5px;line-height:14px;font-size:13px;color:#d4d4d4;font-style:italic;letter-spacing:-0.3px;">fx</div><svg style="left:849px;top:44px;" width="4" height="3" viewBox="0 0 4 3"><path d="M0 0H4L2 2.5Z" fill="#d0d0d0"/></svg><svg style="left:784px;top:56px;shape-rendering:crispEdges;" width="11" height="11" viewBox="0 0 11 11"><rect x="0" y="0" width="11" height="11" fill="#d6d6d6"/><rect x="1" y="1" width="3" height="3" fill="#8a8a8a"/><rect x="7" y="1" width="3" height="3" fill="#8a8a8a"/><rect x="4" y="4" width="3" height="3" fill="#8a8a8a"/><rect x="1" y="7" width="3" height="3" fill="#8a8a8a"/><rect x="7" y="7" width="3" height="3" fill="#8a8a8a"/></svg><div style="left:801.5px;top:55px;width:38px;height:14px;background:#a6a6a6;border:1px solid #2b2b2b;box-shadow:inset 0 1px 1px rgba(0,0,0,.25);"></div><div class="t" style="left:805.5px;top:55.2px;line-height:14px;font-size:9.5px;color:#000;letter-spacing:-0.25px;-webkit-text-stroke:0.12px #000;">100 %</div><div style="left:838.5px;top:55px;width:14px;height:14px;background:#5e5e5e;border:1px solid #2b2b2b;"></div><svg style="left:838.5px;top:55px;" width="14" height="14" viewBox="0 0 14 14"><path d="M5.0 3.5 L9.5 7.0 L5.0 10.5Z" fill="#e4e4e4"/></svg><div style="left:860px;top:32px;width:1px;height:37px;background:#383838;"></div><div style="left:861px;top:32px;width:1px;height:37px;background:#545454;"></div><div style="left:863px;top:30.5px;width:22px;height:19px;background:#2d2d2d;"></div><svg style="left:867px;top:33px;shape-rendering:crispEdges;" width="14" height="13" viewBox="0 0 14 13"><rect x="0" y="0" width="14" height="1" fill="#e0e0e0"/><rect x="0" y="2" width="14" height="1" fill="#e0e0e0"/><rect x="0" y="4" width="14" height="1" fill="#e0e0e0"/><rect x="0" y="6" width="14" height="1" fill="#e0e0e0"/><rect x="0" y="8" width="14" height="1" fill="#e0e0e0"/><rect x="0" y="10" width="14" height="1" fill="#e0e0e0"/><rect x="0" y="12" width="14" height="1" fill="#e0e0e0"/><rect x="3.5" y="2.5" width="7" height="8" fill="none" stroke="#9a9a9a" stroke-width="0.6"/></svg><svg style="left:893px;top:33px;shape-rendering:crispEdges;" width="14" height="13" viewBox="0 0 14 13"><rect x="0" y="0" width="14" height="1" fill="#e0e0e0"/><rect x="0" y="2" width="14" height="1" fill="#e0e0e0"/><rect x="0" y="4" width="14" height="1" fill="#e0e0e0"/><rect x="0" y="6" width="14" height="1" fill="#e0e0e0"/><rect x="0" y="8" width="14" height="1" fill="#e0e0e0"/><rect x="0" y="10" width="14" height="1" fill="#e0e0e0"/><rect x="0" y="12" width="14" height="1" fill="#e0e0e0"/><rect x="3" y="1.5" width="8" height="9.5" fill="#484848"/><rect x="4.5" y="3.5" width="5" height="6" fill="#7c7c7c" stroke="#d8d8d8" stroke-width="1"/></svg><svg style="left:867px;top:56px;" width="14" height="13" viewBox="0 0 14 13"><rect x="0" y="0" width="14" height="1" fill="#e0e0e0"/><rect x="0" y="2" width="14" height="1" fill="#e0e0e0"/><rect x="0" y="4" width="14" height="1" fill="#e0e0e0"/><rect x="0" y="6" width="14" height="1" fill="#e0e0e0"/><rect x="0" y="8" width="14" height="1" fill="#e0e0e0"/><rect x="0" y="10" width="14" height="1" fill="#e0e0e0"/><rect x="0" y="12" width="14" height="1" fill="#e0e0e0"/><ellipse cx="7" cy="6.5" rx="5.5" ry="6" fill="#484848"/><ellipse cx="7" cy="6.5" rx="4" ry="4.4" fill="#c8c8c8"/></svg><svg style="left:893px;top:56px;shape-rendering:crispEdges;" width="14" height="13" viewBox="0 0 14 13"><rect x="0" y="0" width="14" height="1" fill="#e0e0e0"/><rect x="0" y="2" width="14" height="1" fill="#e0e0e0"/><rect x="0" y="10" width="14" height="1" fill="#e0e0e0"/><rect x="0" y="12" width="14" height="1" fill="#e0e0e0"/><rect x="4" y="4" width="6" height="4.5" fill="#c8c8c8"/></svg><div style="left:916px;top:32px;width:1px;height:37px;background:#383838;"></div><div style="left:917px;top:32px;width:1px;height:37px;background:#545454;"></div><svg style="left:921px;top:35px;" width="14" height="14" viewBox="0 0 14 14"><rect x="2.5" y="2.5" width="9" height="9" fill="#6a6a6a" stroke="#e0e0e0" stroke-width="1.2"/><rect x="0" y="0" width="3.4" height="3.4" fill="#38a8f8"/><rect x="10.6" y="0" width="3.4" height="3.4" fill="#38a8f8"/><rect x="0" y="10.6" width="3.4" height="3.4" fill="#38a8f8"/><rect x="10.6" y="10.6" width="3.4" height="3.4" fill="#38a8f8"/></svg><div style="left:941.5px;top:34px;width:13px;height:14px;background:#5e5e5e;border:1px solid #2b2b2b;"></div><div style="left:942.5px;top:40.5px;width:11px;height:1px;background:#2b2b2b;"></div><svg style="left:941.5px;top:34px;" width="13" height="14" viewBox="0 0 13 14"><path d="M3.5 5.0 L6.5 1.7999999999999998 L9.5 5.0Z M3.5 9.0 L6.5 12.2 L9.5 9.0Z" fill="#e4e4e4"/></svg><div style="left:956.5px;top:34px;width:47px;height:14px;background:#a6a6a6;border:1px solid #2b2b2b;box-shadow:inset 0 1px 1px rgba(0,0,0,.25);"></div><div class="t" style="left:959.0px;top:34.2px;line-height:14px;font-size:9.5px;color:#000;letter-spacing:-0.25px;-webkit-text-stroke:0.12px #000;">4,233 mm</div><div style="left:941.5px;top:56px;width:27px;height:13px;background:#a6a6a6;border:1px solid #2b2b2b;box-shadow:inset 0 1px 1px rgba(0,0,0,.25);"></div><svg style="left:943px;top:57px;" width="26" height="11" viewBox="0 0 26 11"><path d="M2 2.5H15.5V10" fill="none" stroke="#1a1a1a" stroke-width="1.4"/></svg><div style="left:967.5px;top:56px;width:14px;height:13px;background:#5e5e5e;border:1px solid #2b2b2b;"></div><svg style="left:967.5px;top:56px;" width="14" height="13" viewBox="0 0 14 13"><path d="M3.5 4.3 L10.5 4.3 L7.0 9.3Z" fill="#e4e4e4"/></svg><div style="left:1012px;top:32px;width:1px;height:37px;background:#383838;"></div><div style="left:1013px;top:32px;width:1px;height:37px;background:#545454;"></div><svg style="left:1018px;top:32px;" width="16" height="16" viewBox="0 0 16 16"><rect x="2" y="2" width="12" height="9" fill="#9a9a9a"/><rect x="2" y="2" width="12" height="11" fill="none" stroke="#d8d8d8" stroke-width="1.1"/><circle cx="2" cy="2" r="1.25" fill="#484848" stroke="#e0e0e0" stroke-width="0.8"/><circle cx="14" cy="2" r="1.25" fill="#484848" stroke="#e0e0e0" stroke-width="0.8"/><circle cx="2" cy="13" r="1.25" fill="#484848" stroke="#e0e0e0" stroke-width="0.8"/><circle cx="14" cy="13" r="1.25" fill="#484848" stroke="#e0e0e0" stroke-width="0.8"/><path d="M2 15H14" stroke="#d8d8d8" stroke-dasharray="2 1.2"/><path d="M10.5 5.5L13.5 2.5M13.5 2.5H11M13.5 2.5V5" stroke="#fff" stroke-width="0.9" fill="none"/></svg><svg style="left:1044px;top:32px;" width="16" height="16" viewBox="0 0 16 16"><path d="M4 3h5l3 3v7H4Z" fill="#9a9a9a"/><rect x="2" y="2" width="12" height="11" fill="none" stroke="#d8d8d8" stroke-width="1.1"/><circle cx="2" cy="2" r="1.25" fill="#484848" stroke="#e0e0e0" stroke-width="0.8"/><circle cx="14" cy="2" r="1.25" fill="#484848" stroke="#e0e0e0" stroke-width="0.8"/><circle cx="2" cy="13" r="1.25" fill="#484848" stroke="#e0e0e0" stroke-width="0.8"/><circle cx="14" cy="13" r="1.25" fill="#484848" stroke="#e0e0e0" stroke-width="0.8"/><path d="M9 3v3h3" fill="none" stroke="#e8e8e8" stroke-width="0.9"/></svg><div style="left:1067px;top:33px;width:1px;height:14px;background:#5a5a5a;"></div><svg style="left:1074px;top:32px;" width="16" height="16" viewBox="0 0 16 16"><rect x="2" y="2" width="12" height="11" fill="#2c2c2c"/><path d="M3 3h4l2 2v3H3Z" fill="#a8a8a8"/><rect x="2" y="2" width="12" height="11" fill="none" stroke="#d8d8d8" stroke-width="1.1"/><circle cx="2" cy="2" r="1.25" fill="#484848" stroke="#e0e0e0" stroke-width="0.8"/><circle cx="14" cy="2" r="1.25" fill="#484848" stroke="#e0e0e0" stroke-width="0.8"/><circle cx="2" cy="13" r="1.25" fill="#484848" stroke="#e0e0e0" stroke-width="0.8"/><circle cx="14" cy="13" r="1.25" fill="#484848" stroke="#e0e0e0" stroke-width="0.8"/><path d="M6 10.5h6M10 8.5l2 2l-2 2M7 6v6M5.5 10.5L7 12.5L8.5 10.5" stroke="#fff" stroke-width="0.9" fill="none"/></svg><svg style="left:1100px;top:32px;" width="16" height="16" viewBox="0 0 16 16"><rect x="2" y="2" width="12" height="11" fill="#2c2c2c"/><path d="M3 3h4l2 2v3H3Z" fill="#a8a8a8"/><rect x="2" y="2" width="12" height="11" fill="none" stroke="#d8d8d8" stroke-width="1.1"/><circle cx="2" cy="2" r="1.25" fill="#484848" stroke="#e0e0e0" stroke-width="0.8"/><circle cx="14" cy="2" r="1.25" fill="#484848" stroke="#e0e0e0" stroke-width="0.8"/><circle cx="2" cy="13" r="1.25" fill="#484848" stroke="#e0e0e0" stroke-width="0.8"/><circle cx="14" cy="13" r="1.25" fill="#484848" stroke="#e0e0e0" stroke-width="0.8"/><path d="M13 6.5H9.5M11 5L9.5 6.5L11 8M6.5 12.5V9.5M5 11L6.5 9.5L8 11" stroke="#fff" stroke-width="0.9" fill="none"/></svg><svg style="left:1126px;top:32px;" width="16" height="16" viewBox="0 0 16 16"><rect x="2" y="2" width="12" height="11" fill="#2c2c2c"/><path d="M5 4.5h4l2 2v4H5Z" fill="#b4b4b4"/><rect x="2" y="2" width="12" height="11" fill="none" stroke="#d8d8d8" stroke-width="1.1"/><circle cx="2" cy="2" r="1.25" fill="#484848" stroke="#e0e0e0" stroke-width="0.8"/><circle cx="14" cy="2" r="1.25" fill="#484848" stroke="#e0e0e0" stroke-width="0.8"/><circle cx="2" cy="13" r="1.25" fill="#484848" stroke="#e0e0e0" stroke-width="0.8"/><circle cx="14" cy="13" r="1.25" fill="#484848" stroke="#e0e0e0" stroke-width="0.8"/></svg><div style="left:1017.5px;top:57px;width:11px;height:10.5px;background:#5c5c5c;border:1px solid #303030;"></div><div class="t" style="left:1033px;top:55.5px;line-height:14px;font-size:9.5px;color:#dedede;letter-spacing:-0.25px;">Automatisch einpassen</div><div style="left:1150px;top:32px;width:1px;height:37px;background:#383838;"></div><div style="left:1151px;top:32px;width:1px;height:37px;background:#545454;"></div><svg style="left:1156px;top:33px;" width="15" height="15" viewBox="0 0 15 15"><rect x="0.5" y="0" width="1" height="14" fill="#d8d8d8"/><rect x="3.5" y="1.5" width="6" height="4" fill="#c4c4c4"/><rect x="3.5" y="8.5" width="10" height="4" fill="#484848" stroke="#d8d8d8"/></svg><svg style="left:1182px;top:32px;" width="15" height="17" viewBox="0 0 15 17"><rect x="7" y="0" width="1" height="17" fill="#d8d8d8"/><rect x="4.5" y="2.5" width="6" height="4" fill="#c4c4c4"/><rect x="2.5" y="9.5" width="10" height="4" fill="#484848" stroke="#d8d8d8"/></svg><svg style="left:1209px;top:33px;" width="15" height="15" viewBox="0 0 15 15"><rect x="13.5" y="0" width="1" height="14" fill="#d8d8d8"/><rect x="5.5" y="1.5" width="6" height="4" fill="#c4c4c4"/><rect x="1.5" y="8.5" width="10" height="4" fill="#484848" stroke="#d8d8d8"/></svg><svg style="left:1232px;top:32px;" width="22" height="17" viewBox="0 0 22 17"><rect x="0.5" y="0" width="1" height="16" fill="#d8d8d8"/><rect x="3.5" y="1.5" width="6" height="4" fill="none" stroke="#d8d8d8" stroke-dasharray="1 1"/><rect x="3.5" y="8.5" width="10" height="5" fill="none" stroke="#d8d8d8" stroke-dasharray="1 1"/><path d="M16 9.5H21L18.5 12.5Z" fill="#d8d8d8"/></svg><svg style="left:1157px;top:55px;" width="15" height="15" viewBox="0 0 15 15"><rect x="0" y="0.5" width="14" height="1" fill="#d8d8d8"/><rect x="1.5" y="3.5" width="4" height="10" fill="#484848" stroke="#d8d8d8"/><rect x="8.5" y="3.5" width="4" height="6" fill="#c4c4c4"/></svg><svg style="left:1182px;top:55px;" width="17" height="15" viewBox="0 0 17 15"><rect x="0" y="7" width="17" height="1" fill="#d8d8d8"/><rect x="2.5" y="2.5" width="4" height="10" fill="#484848" stroke="#d8d8d8"/><rect x="9.5" y="4.5" width="4" height="6" fill="#c4c4c4"/></svg><svg style="left:1209px;top:56px;" width="15" height="15" viewBox="0 0 15 15"><rect x="0" y="13.5" width="14" height="1" fill="#d8d8d8"/><rect x="1.5" y="1.5" width="4" height="10" fill="#484848" stroke="#d8d8d8"/><rect x="8.5" y="5.5" width="4" height="6" fill="#c4c4c4"/></svg><div style="left:1260px;top:32px;width:1px;height:37px;background:#383838;"></div><div style="left:1261px;top:32px;width:1px;height:37px;background:#545454;"></div><svg style="left:1266px;top:33px;" width="16" height="14" viewBox="0 0 16 14"><rect x="0" y="1" width="16" height="1" fill="#d8d8d8"/><rect x="5" y="2" width="6" height="3.5" fill="#c4c4c4"/><rect x="0" y="8" width="16" height="1" fill="#d8d8d8"/><rect x="3.5" y="9.5" width="9" height="3" fill="#484848" stroke="#d8d8d8"/></svg><svg style="left:1292px;top:33px;" width="16" height="14" viewBox="0 0 16 14"><rect x="0" y="3" width="16" height="1" fill="#d8d8d8"/><rect x="5" y="1.5" width="6" height="4" fill="#c4c4c4"/><rect x="0" y="10" width="16" height="1" fill="#d8d8d8"/><rect x="3.5" y="8.5" width="9" height="4" fill="#484848" stroke="#d8d8d8"/></svg><svg style="left:1318px;top:33px;" width="16" height="14" viewBox="0 0 16 14"><rect x="0" y="5" width="16" height="1" fill="#d8d8d8"/><rect x="5" y="1.5" width="6" height="3.5" fill="#c4c4c4"/><rect x="0" y="12.5" width="16" height="1" fill="#d8d8d8"/><rect x="3.5" y="9" width="9" height="3.5" fill="#484848" stroke="#d8d8d8"/></svg><svg style="left:1268px;top:55px;" width="14" height="16" viewBox="0 0 14 16"><rect x="1" y="0" width="1" height="16" fill="#d8d8d8"/><rect x="2.5" y="2.5" width="3" height="9" fill="#484848" stroke="#d8d8d8"/><rect x="8" y="0" width="1" height="16" fill="#d8d8d8"/><rect x="9" y="5" width="3.5" height="6" fill="#c4c4c4"/></svg><svg style="left:1294px;top:55px;" width="14" height="16" viewBox="0 0 14 16"><rect x="3" y="0" width="1" height="16" fill="#d8d8d8"/><rect x="1.5" y="3.5" width="4" height="9" fill="#484848" stroke="#d8d8d8"/><rect x="10" y="0" width="1" height="16" fill="#d8d8d8"/><rect x="8.5" y="5" width="4" height="6" fill="#c4c4c4"/></svg><svg style="left:1318px;top:55px;" width="14" height="16" viewBox="0 0 14 16"><rect x="5" y="0" width="1" height="16" fill="#d8d8d8"/><rect x="1" y="5" width="4" height="6" fill="#c4c4c4"/><rect x="12" y="0" width="1" height="16" fill="#d8d8d8"/><rect x="8.5" y="2.5" width="3.5" height="9" fill="#484848" stroke="#d8d8d8"/></svg><div style="left:1342px;top:32px;width:1px;height:37px;background:#383838;"></div><div style="left:1343px;top:32px;width:1px;height:37px;background:#545454;"></div><svg style="left:1350px;top:34px;" width="13" height="13" viewBox="0 0 13 13"><rect x="0.5" y="0.5" width="2.2" height="2.2" fill="none" stroke="#e0e0e0" stroke-width="0.9"/><rect x="0.5" y="4.5" width="2.2" height="2.2" fill="none" stroke="#e0e0e0" stroke-width="0.9"/><rect x="0.5" y="8.5" width="2.2" height="2.2" fill="none" stroke="#e0e0e0" stroke-width="0.9"/><rect x="4.5" y="0.5" width="2.2" height="2.2" fill="none" stroke="#e0e0e0" stroke-width="0.9"/><rect x="4.5" y="8.5" width="2.2" height="2.2" fill="none" stroke="#e0e0e0" stroke-width="0.9"/><rect x="8.5" y="0.5" width="2.2" height="2.2" fill="none" stroke="#e0e0e0" stroke-width="0.9"/><rect x="8.5" y="4.5" width="2.2" height="2.2" fill="none" stroke="#e0e0e0" stroke-width="0.9"/><rect x="8.5" y="8.5" width="2.2" height="2.2" fill="none" stroke="#e0e0e0" stroke-width="0.9"/><rect x="1.6" y="1.6" width="8" height="8" fill="none" stroke="#e0e0e0" stroke-width="0.7" stroke-dasharray="1 1"/><path d="M10 10.5H13L11.5 12.5Z" fill="#d0d0d0"/></svg><div style="left:1371.5px;top:33.5px;width:118px;height:14px;background:#a6a6a6;border:1px solid #2b2b2b;box-shadow:inset 0 1px 1px rgba(0,0,0,.25);"></div><div class="t" style="left:1374.5px;top:33.7px;line-height:14px;font-size:9.5px;color:#000;letter-spacing:-0.25px;-webkit-text-stroke:0.12px #000;">[Ohne]+</div><div style="left:1488.5px;top:33.5px;width:13px;height:14px;background:#5e5e5e;border:1px solid #2b2b2b;"></div><svg style="left:1488.5px;top:33.5px;" width="13" height="14" viewBox="0 0 13 14"><path d="M3.0 4.8 L10.0 4.8 L6.5 9.8Z" fill="#e4e4e4"/></svg><svg style="left:1453px;top:57px;" width="21" height="12" viewBox="0 0 21 12"><rect x="0.5" y="0.5" width="7" height="7" fill="#8a8a8a" stroke="#6e6e6e"/><rect x="4" y="3.5" width="7" height="7" fill="#333" stroke="#787878"/><path d="M14 8.5H18.5A2.3 2.3 0 0 0 18.5 4H14.5" fill="none" stroke="#8a8a8a" stroke-width="1"/><path d="M16 2L13.5 4L16 6" fill="none" stroke="#8a8a8a"/></svg><svg style="left:1481px;top:58px;" width="20" height="11" viewBox="0 0 20 11"><rect x="0" y="0.5" width="10" height="10" fill="#e8e8e8"/><rect x="1.8" y="2.3" width="6.4" height="6.4" rx="1.5" fill="#333" stroke="#333" stroke-dasharray="1.5 1"/><path d="M13 8.5L18 2.5M13.5 3.5L17.5 7M13 5.8H18.5" stroke="#bdbdbd" stroke-width="0.9"/></svg><div style="left:1508px;top:32px;width:1px;height:37px;background:#383838;"></div><div style="left:1509px;top:32px;width:1px;height:37px;background:#545454;"></div><svg style="left:1875px;top:43px;" width="11" height="17" viewBox="0 0 11 17"><path d="M6 0L1 9H5L3.2 16.5L10 6.5H5.8L8.5 0Z" fill="#cfcfcf"/></svg><div style="left:1895px;top:32px;width:1px;height:37px;background:#383838;"></div><div style="left:1896px;top:32px;width:1px;height:37px;background:#545454;"></div><svg style="left:1901px;top:46px;shape-rendering:crispEdges;" width="14" height="9" viewBox="0 0 14 9"><path d="M0 3H5L2.5 5.8Z" fill="#d8d8d8"/><path d="M6 1H14M6 3.3H14M6 5.6H14M6 8H14" stroke="#d8d8d8" stroke-width="1"/></svg><svg style="left:44px;top:82px;" width="7" height="7" viewBox="0 0 7 7"><path d="M0.8 0.8L6.2 6.2M6.2 0.8L0.8 6.2" stroke="#e0e0e0" stroke-width="1.1"/></svg><div class="t" style="left:58px;top:79.0px;line-height:14px;font-size:11px;color:#e4e4e4;font-weight:bold;letter-spacing:-0.1px;">*a4_portrait_1s.indd @ 731 % [Umgewandelt]</div><svg style="left:4px;top:78.5px;" width="8" height="7" viewBox="0 0 8 7"><path d="M0 0L3.5 3.5L0 7ZM4 0L7.5 3.5L4 7Z" fill="#bdbdbd"/></svg>
<div style="left:6px;top:91px;width:20px;height:5px;background:repeating-linear-gradient(90deg,#1c1c1c 0 1px,transparent 1px 2px);"></div><div style="left:4px;top:104px;width:24px;height:20px;background:#2d2d2d;border-radius:1px;"></div><svg style="left:10px;top:106px;" width="12" height="17" viewBox="0 0 12 17"><path d="M1.5 1V13L4.5 10.2L6.8 15.5L9 14.5L6.7 9.3H10.5Z" fill="#2d2d2d" stroke="#e8e8e8" stroke-width="1.2" stroke-linejoin="miter"/></svg><svg style="left:11px;top:127px;" width="12" height="17" viewBox="0 0 12 17"><path d="M1 0.5V12.5L4 9.8L6.3 15L8.8 14L6.5 8.8H10.5Z" fill="#d8d8d8"/></svg><svg style="left:9px;top:148px;" width="16" height="16" viewBox="0 0 16 16"><defs><linearGradient id="pg1" x1="0" y1="0" x2="0" y2="1"><stop offset="0" stop-color="#e8e8e8"/><stop offset="1" stop-color="#a8a8a8"/></linearGradient></defs><path d="M1 1H7.5V6.5H12V13.5H1Z" fill="url(#pg1)"/><path d="M8.5 1L12 5.5H8.5Z" fill="#bdbdbd"/><path d="M10 9.5V15.5L15 12.5Z" fill="#e8e8e8" stroke="#484848" stroke-width="0.6"/></svg><svg style="left:6px;top:170px;" width="20" height="14" viewBox="0 0 20 14"><path d="M1 0V14M19 0V14" stroke="#d8d8d8" stroke-width="1.4"/><path d="M5 7H15" stroke="#e0e0e0" stroke-width="1.4"/><path d="M7 3.8L3.2 7L7 10.2ZM13 3.8L16.8 7L13 10.2Z" fill="#e0e0e0"/></svg><svg style="left:9px;top:190px;" width="17" height="16" viewBox="0 0 17 16"><path d="M1 6V14.5H14V6" fill="none" stroke="#d8d8d8" stroke-width="1.6"/><path d="M4.5 9.5h1.8M7.5 9.5h1.8M10.5 9.5h1.8M4.5 12h1.8M7.5 12h1.8M10.5 12h1.8" stroke="#d8d8d8" stroke-width="1.4"/><path d="M3 0.8L7.5 5.3" stroke="#e0e0e0" stroke-width="1.5"/><path d="M8.5 2.5V6.5H4.5Z" fill="#e0e0e0"/><path d="M17 12.5V16H13.5Z" fill="#d8d8d8"/></svg><div style="left:3px;top:211.5px;width:26px;height:1px;background:#333;"></div><div style="left:3px;top:212.5px;width:26px;height:1px;background:#5a5a5a;"></div><div class="t" style="left:9px;top:216.0px;line-height:20px;font-size:19px;color:#dcdcdc;font-family:'Liberation Serif',serif;">T</div><svg style="left:22px;top:231px;" width="4" height="4" viewBox="0 0 4 4"><path d="M4 0V4H0Z" fill="#d8d8d8"/></svg><svg style="left:9px;top:240px;" width="14" height="14" viewBox="0 0 14 14"><path d="M0.8 13.2L13.2 0.8" stroke="#d8d8d8" stroke-width="1.3"/></svg><svg style="left:5px;top:258px;" width="22" height="19" viewBox="0 0 22 19"><path d="M0 3.5H6" stroke="#d8d8d8" stroke-width="1.2"/><path d="M12.5 1L19.5 6.5L16.5 9.5L10 4Z" fill="#d8d8d8"/><path d="M9.5 4.8L15.8 10.2L12 15.5L5 17.5L6.5 10Z" fill="#bcbcbc" stroke="#e0e0e0" stroke-width="0.8"/><path d="M5.5 17L10.5 11" stroke="#484848" stroke-width="1"/><circle cx="10.8" cy="10.6" r="1.2" fill="#484848"/></svg><svg style="left:22px;top:272px;" width="4" height="4" viewBox="0 0 4 4"><path d="M4 0V4H0Z" fill="#d8d8d8"/></svg><svg style="left:7px;top:280px;" width="18" height="17" viewBox="0 0 18 17"><path d="M11.5 1.2L15.5 5.2L6 14.7L1 16L2.2 11Z" fill="#bcbcbc"/><path d="M11.5 1.2L15.5 5.2L13.5 7.2L9.5 3.2Z" fill="#e0e0e0"/><path d="M1 16L2.2 11L6 14.7Z" fill="#888"/></svg><svg style="left:22px;top:293px;" width="4" height="4" viewBox="0 0 4 4"><path d="M4 0V4H0Z" fill="#d8d8d8"/></svg><svg style="left:8px;top:303px;" width="17" height="14" viewBox="0 0 17 14"><rect x="0.7" y="0.7" width="14.6" height="11.6" fill="#6a6a6a" stroke="#dcdcdc" stroke-width="1.3"/><path d="M1 1L15 12M15 1L1 12" stroke="#dcdcdc" stroke-width="1"/></svg><svg style="left:22px;top:314px;" width="4" height="4" viewBox="0 0 4 4"><path d="M4 0V4H0Z" fill="#d8d8d8"/></svg><svg style="left:8px;top:324px;" width="17" height="14" viewBox="0 0 17 14"><defs><linearGradient id="rt1" x1="0" y1="0" x2="0" y2="1"><stop offset="0" stop-color="#8a8a8a"/><stop offset="1" stop-color="#606060"/></linearGradient></defs><rect x="0.7" y="0.7" width="14.6" height="11.6" fill="url(#rt1)" stroke="#dcdcdc" stroke-width="1.3"/></svg><svg style="left:22px;top:335px;" width="4" height="4" viewBox="0 0 4 4"><path d="M4 0V4H0Z" fill="#d8d8d8"/></svg><div style="left:3px;top:345px;width:26px;height:1px;background:#333;"></div><div style="left:3px;top:346px;width:26px;height:1px;background:#5a5a5a;"></div><svg style="left:8px;top:352px;" width="17" height="14" viewBox="0 0 17 14"><path d="M16 1L5 9M16 12.5L5 4.5" stroke="#dcdcdc" stroke-width="1.5"/><circle cx="3.3" cy="3" r="2.3" fill="none" stroke="#dcdcdc" stroke-width="1.3"/><circle cx="3.3" cy="10.8" r="2.3" fill="none" stroke="#dcdcdc" stroke-width="1.3"/></svg><svg style="left:7px;top:371px;" width="19" height="17" viewBox="0 0 19 17"><rect x="6" y="3.5" width="11" height="10" fill="#6a6a6a" stroke="#dcdcdc" stroke-dasharray="2 1.3" stroke-width="1.2"/><path d="M0.5 1V11.5L3.3 9L5.5 13.5L7.5 12.5L5.3 8H9Z" fill="#dcdcdc"/></svg><svg style="left:22px;top:384px;" width="4" height="4" viewBox="0 0 4 4"><path d="M4 0V4H0Z" fill="#d8d8d8"/></svg><svg style="left:8px;top:394px;" width="17" height="14" viewBox="0 0 17 14"><defs><linearGradient id="gs1" x1="0" y1="0" x2="1" y2="0"><stop offset="0" stop-color="#f0f0f0"/><stop offset="1" stop-color="#3a3a3a"/></linearGradient></defs><rect x="0.5" y="0.5" width="15" height="12" fill="url(#gs1)" stroke="#2a2a2a" stroke-width="1"/></svg><svg style="left:8px;top:414px;" width="17" height="14" viewBox="0 0 17 14"><defs><linearGradient id="gf1" x1="0" y1="0" x2="0" y2="1"><stop offset="0" stop-color="#eaeaea"/><stop offset="0.5" stop-color="#bdbdbd"/><stop offset="1" stop-color="#9a9a9a" stop-opacity="0.5"/></linearGradient></defs><rect x="1" y="1" width="15" height="12" fill="#8a8a8a"/><rect x="1.0" y="6.0" width="2.5" height="2.5" fill="#2c2c2c"/><rect x="1.0" y="11.0" width="2.5" height="2.5" fill="#2c2c2c"/><rect x="3.5" y="8.5" width="2.5" height="2.5" fill="#2c2c2c"/><rect x="6.0" y="6.0" width="2.5" height="2.5" fill="#2c2c2c"/><rect x="6.0" y="11.0" width="2.5" height="2.5" fill="#2c2c2c"/><rect x="8.5" y="8.5" width="2.5" height="2.5" fill="#2c2c2c"/><rect x="11.0" y="6.0" width="2.5" height="2.5" fill="#2c2c2c"/><rect x="11.0" y="11.0" width="2.5" height="2.5" fill="#2c2c2c"/><rect x="13.5" y="8.5" width="2.5" height="2.5" fill="#2c2c2c"/><rect x="1" y="1" width="15" height="12" fill="url(#gf1)" opacity="0.75"/></svg><div style="left:3px;top:436px;width:26px;height:1px;background:#333;"></div><div style="left:3px;top:437px;width:26px;height:1px;background:#5a5a5a;"></div><svg style="left:9px;top:443px;" width="15" height="14" viewBox="0 0 15 14"><path d="M0.5 0.5H14V9.5L10 13.5H0.5Z" fill="#c4c4c4"/><path d="M10 13.5V9.5H14Z" fill="#767676"/><path d="M3 3.5H11.5M3 6H11.5M3 8.5H8" stroke="#4a4a4a" stroke-width="1.1"/></svg><svg style="left:6px;top:462px;" width="20" height="18" viewBox="0 0 20 18"><path d="M13.5 0.8L16.2 3.5L13.5 6.8L10.2 3.5Z" fill="#e4e4e4"/><path d="M10.5 4.5L12.5 6.5L5.5 13L3.5 13.5L4 11.5Z" fill="#b4b4b4" stroke="#e0e0e0" stroke-width="0.6"/><path d="M2 15.5H13" stroke="#dcdcdc" stroke-width="2.2" stroke-dasharray="2 1"/><path d="M1 13V17.5H14V13" fill="none" stroke="#dcdcdc" stroke-width="0.9"/></svg><svg style="left:22px;top:478px;" width="4" height="4" viewBox="0 0 4 4"><path d="M4 0V4H0Z" fill="#d8d8d8"/></svg><svg style="left:7px;top:484px;" width="18" height="17" viewBox="0 0 18 17"><g fill="#d8d8d8"><rect x="4" y="3" width="2.3" height="8" rx="1.1" transform="rotate(-14 5 10)"/><rect x="7" y="1" width="2.3" height="9" rx="1.1" transform="rotate(-4 8 9)"/><rect x="10" y="1.2" width="2.3" height="9" rx="1.1" transform="rotate(5 11 9)"/><rect x="13" y="3" width="2.2" height="8" rx="1.1" transform="rotate(16 14 10)"/><path d="M5 8.5H15.5C15.5 12 14.5 14 13.5 16H7.5C6 14 3.5 12.5 1.2 10.2C0.6 9.2 1.8 8.2 2.8 8.9L5 10.6Z"/></g></svg><svg style="left:9px;top:504px;" width="17" height="17" viewBox="0 0 17 17"><circle cx="6.2" cy="6.2" r="4.8" fill="#9a9a9a" stroke="#d8d8d8" stroke-width="1.6"/><path d="M9.8 9.8L15 15" stroke="#d0d0d0" stroke-width="2.6" stroke-linecap="round"/></svg><div style="left:3px;top:526.5px;width:26px;height:1px;background:#333;"></div><div style="left:3px;top:527.5px;width:26px;height:1px;background:#5a5a5a;"></div><div style="left:14.5px;top:539px;width:11px;height:11px;background:#fff;border:1px solid #2a2a2a;box-shadow:0 0 0 1px #d8d8d8;"></div><svg style="left:14.5px;top:539px;" width="11" height="11" viewBox="0 0 11 11"><rect x="3" y="3" width="5" height="5" fill="#484848"/><path d="M1.5 9.5L9.5 1.5" stroke="#ee2010" stroke-width="2"/></svg><div style="left:6px;top:531px;width:11.5px;height:12px;background:#fff;box-shadow:0 0 0 1px #3a3a3a;"></div><svg style="left:19.5px;top:530.5px;" width="7" height="7" viewBox="0 0 7 7"><path d="M1 2.5H4A1.8 1.8 0 0 1 5.5 4.5V6" fill="none" stroke="#d8d8d8" stroke-width="1"/><path d="M2.5 0.5L0.5 2.5L2.5 4.5M4 4.5L5.5 6.5L7 4.5" fill="none" stroke="#d8d8d8" stroke-width="0.9"/></svg><div style="left:8px;top:555px;width:7.5px;height:7px;background:#1a1a1a;border:1px solid #e0e0e0;"></div><div style="left:5px;top:551.5px;width:7px;height:7px;background:#fff;border:1px solid #222;"></div><svg style="left:5px;top:551.5px;" width="7" height="7" viewBox="0 0 7 7"><path d="M1 6L6 1" stroke="#ee2010" stroke-width="1.2"/></svg><div style="left:5px;top:564px;width:9px;height:9px;background:#6e6e6e;border:1px solid #d8d8d8;box-shadow:0 0 0 1px #2c2c2c;"></div><div class="t" style="left:19.5px;top:563.0px;line-height:12px;font-size:11px;color:#8a8a8a;font-weight:bold;font-family:'Liberation Serif',serif;">T</div><div style="left:4px;top:580px;width:24px;height:19.5px;background:#2d2d2d;border-radius:1px;"></div><div style="left:10px;top:584px;width:12px;height:11.5px;background:#fff;box-shadow:0 0 0 1px #555;"></div><svg style="left:22.5px;top:593.5px;" width="4" height="4" viewBox="0 0 4 4"><path d="M4 0V4H0Z" fill="#d8d8d8"/></svg><div style="left:4px;top:605.5px;width:24px;height:19.5px;background:#2d2d2d;border-radius:1px;"></div><svg style="left:10.5px;top:610px;" width="12" height="11" viewBox="0 0 12 11"><rect x="0.5" y="0.5" width="11" height="10" fill="#3a3a3a" stroke="#e0e0e0"/><rect x="1" y="1" width="10" height="2" fill="#e0e0e0"/><rect x="4.5" y="5" width="5" height="3.5" fill="none" stroke="#e0e0e0" stroke-width="0.9"/></svg><svg style="left:22.5px;top:619px;" width="4" height="4" viewBox="0 0 4 4"><path d="M4 0V4H0Z" fill="#d8d8d8"/></svg>
<div style="left:1712px;top:76px;width:208px;height:12px;background:#2e2e2e;"></div><svg style="left:1907.7px;top:78.7px;" width="8" height="6" viewBox="0 0 8 6"><path d="M0 0L3.3 2.7L0 5.4ZM3.8 0L7.1 2.7L3.8 5.4Z" fill="#c4c4c4"/></svg><div style="left:1712px;top:88px;width:208px;height:17px;background:#333333;border-bottom:1px solid #2b2b2b;"></div><div style="left:1712px;top:88px;width:37px;height:16px;background:#3c3c3c;border-right:1px solid #2b2b2b;"></div><div class="t" style="left:1718.5px;top:89.3px;line-height:14px;font-size:10.5px;color:#a2a2a2;font-weight:bold;letter-spacing:-0.15px;">Seiten</div><div style="left:1749px;top:88px;width:75px;height:16px;background:#3c3c3c;border-right:1px solid #2b2b2b;"></div><div class="t" style="left:1756px;top:89.3px;line-height:14px;font-size:10.5px;color:#a2a2a2;font-weight:bold;letter-spacing:0.28px;">Verknüpfung</div><div style="left:1824px;top:88px;width:55px;height:17px;background:#484848;border-right:1px solid #2b2b2b;"></div><svg style="left:1828.0px;top:91.5px;" width="6" height="10" viewBox="0 0 6 10"><path d="M0.6 3.8L3 1L5.4 3.8M0.6 6.2L3 9L5.4 6.2" fill="none" stroke="#d8d8d8" stroke-width="1.1"/></svg><div class="t" style="left:1836.5px;top:89.3px;line-height:14px;font-size:10.5px;color:#ececec;font-weight:bold;letter-spacing:-0.15px;">Ebenen</div><svg style="left:1901px;top:92px;shape-rendering:crispEdges;" width="14" height="9" viewBox="0 0 14 9"><path d="M0 3H5L2.5 5.8Z" fill="#d0d0d0"/><path d="M6 1H14M6 3.3H14M6 5.6H14M6 8H14" stroke="#d0d0d0" stroke-width="1"/></svg><div style="left:1712px;top:105px;width:194px;height:229px;background:#484848;"></div><div style="left:1712px;top:124.6px;width:194px;height:1px;background:#3a3a3a;"></div><svg style="left:1715.5px;top:112.6px;" width="13" height="9" viewBox="0 0 13 9"><path d="M0.5 4.8C3 0.5 10 0.5 12.5 4.8C10 8.8 3 8.8 0.5 4.8Z" fill="#3a3a3a" stroke="#c8c8c8" stroke-width="1.1"/><circle cx="6.8" cy="4.3" r="2.4" fill="#c8c8c8"/><circle cx="7.3" cy="3.8" r="0.9" fill="#484848"/></svg><div style="left:1750px;top:107.6px;width:3px;height:17px;background:#4b8df0;"></div><svg style="left:1757px;top:115.6px;" width="9.5" height="5.5" viewBox="0 0 9.5 5.5"><path d="M0 0H9.5L4.75 5.5Z" fill="#d8d8d8"/></svg><div class="t" style="left:1768px;top:109.89999999999999px;line-height:14px;font-size:9.5px;color:#ececec;letter-spacing:-0.25px;">Meine Ebene</div><svg style="left:1871px;top:109.6px;" width="13" height="13" viewBox="0 0 13 13"><path d="M8.2 0.8L12.2 4.8L10 7L6 3Z" fill="#c8c8c8"/><path d="M5.6 3.6L9.4 7.4L7 11L0.8 12.2L2 6Z" fill="#9a9a9a" stroke="#d8d8d8" stroke-width="0.8"/><path d="M1 12L5 8" stroke="#484848" stroke-width="0.9"/></svg><div style="left:1893px;top:112.6px;width:7px;height:7px;background:#6d9cf8;border:1px solid #1e1e1e;"></div><div style="left:1712px;top:143.6px;width:194px;height:1px;background:#3a3a3a;"></div><svg style="left:1715.5px;top:131.6px;" width="13" height="9" viewBox="0 0 13 9"><path d="M0.5 4.8C3 0.5 10 0.5 12.5 4.8C10 8.8 3 8.8 0.5 4.8Z" fill="#3a3a3a" stroke="#c8c8c8" stroke-width="1.1"/><circle cx="6.8" cy="4.3" r="2.4" fill="#c8c8c8"/><circle cx="7.3" cy="3.8" r="0.9" fill="#484848"/></svg><div style="left:1750px;top:126.6px;width:3px;height:17px;background:#4b8df0;"></div><div class="t" style="left:1779px;top:128.9px;line-height:14px;font-size:9.5px;color:#ececec;letter-spacing:-0.25px;">&lt;Quadrat&gt;</div><div style="left:1893px;top:131.6px;width:7px;height:7px;background:#6d9cf8;border:1px solid #1e1e1e;"></div><div style="left:1712px;top:162.6px;width:194px;height:1px;background:#3a3a3a;"></div><svg style="left:1715.5px;top:150.6px;" width="13" height="9" viewBox="0 0 13 9"><path d="M0.5 4.8C3 0.5 10 0.5 12.5 4.8C10 8.8 3 8.8 0.5 4.8Z" fill="#3a3a3a" stroke="#c8c8c8" stroke-width="1.1"/><circle cx="6.8" cy="4.3" r="2.4" fill="#c8c8c8"/><circle cx="7.3" cy="3.8" r="0.9" fill="#484848"/></svg><div style="left:1750px;top:145.6px;width:3px;height:17px;background:#4b8df0;"></div><div class="t" style="left:1779px;top:147.9px;line-height:14px;font-size:9.5px;color:#ececec;letter-spacing:-0.25px;">&lt;Quadrat&gt;</div><div style="left:1893px;top:150.6px;width:7px;height:7px;background:#6d9cf8;border:1px solid #1e1e1e;"></div><div style="left:1712px;top:181.6px;width:194px;height:1px;background:#3a3a3a;"></div><svg style="left:1715.5px;top:169.6px;" width="13" height="9" viewBox="0 0 13 9"><path d="M0.5 4.8C3 0.5 10 0.5 12.5 4.8C10 8.8 3 8.8 0.5 4.8Z" fill="#3a3a3a" stroke="#c8c8c8" stroke-width="1.1"/><circle cx="6.8" cy="4.3" r="2.4" fill="#c8c8c8"/><circle cx="7.3" cy="3.8" r="0.9" fill="#484848"/></svg><div style="left:1750px;top:164.6px;width:3px;height:17px;background:#4b8df0;"></div><div class="t" style="left:1779px;top:166.9px;line-height:14px;font-size:9.5px;color:#ececec;letter-spacing:-0.25px;">&lt;Rechteck&gt;</div><div style="left:1893px;top:169.6px;width:7px;height:7px;background:#6d9cf8;border:1px solid #1e1e1e;"></div><div style="left:1712px;top:200.6px;width:194px;height:1px;background:#3a3a3a;"></div><svg style="left:1715.5px;top:188.6px;" width="13" height="9" viewBox="0 0 13 9"><path d="M0.5 4.8C3 0.5 10 0.5 12.5 4.8C10 8.8 3 8.8 0.5 4.8Z" fill="#3a3a3a" stroke="#c8c8c8" stroke-width="1.1"/><circle cx="6.8" cy="4.3" r="2.4" fill="#c8c8c8"/><circle cx="7.3" cy="3.8" r="0.9" fill="#484848"/></svg><div style="left:1750px;top:183.6px;width:3px;height:17px;background:#4b8df0;"></div><div class="t" style="left:1779px;top:185.9px;line-height:14px;font-size:9.5px;color:#ececec;letter-spacing:-0.25px;">&lt;Quadrat&gt;</div><div style="left:1893px;top:188.6px;width:7px;height:7px;background:#6d9cf8;border:1px solid #1e1e1e;"></div><div style="left:1712px;top:219.6px;width:194px;height:1px;background:#3a3a3a;"></div><svg style="left:1715.5px;top:207.6px;" width="13" height="9" viewBox="0 0 13 9"><path d="M0.5 4.8C3 0.5 10 0.5 12.5 4.8C10 8.8 3 8.8 0.5 4.8Z" fill="#3a3a3a" stroke="#c8c8c8" stroke-width="1.1"/><circle cx="6.8" cy="4.3" r="2.4" fill="#c8c8c8"/><circle cx="7.3" cy="3.8" r="0.9" fill="#484848"/></svg><div style="left:1750px;top:202.6px;width:3px;height:17px;background:#4b8df0;"></div><div class="t" style="left:1779px;top:204.9px;line-height:14px;font-size:9.5px;color:#ececec;letter-spacing:-0.25px;">&lt;Quadrat&gt;</div><div style="left:1893px;top:207.6px;width:7px;height:7px;background:#6d9cf8;border:1px solid #1e1e1e;"></div><div style="left:1712px;top:238.6px;width:194px;height:1px;background:#3a3a3a;"></div><svg style="left:1715.5px;top:226.6px;" width="13" height="9" viewBox="0 0 13 9"><path d="M0.5 4.8C3 0.5 10 0.5 12.5 4.8C10 8.8 3 8.8 0.5 4.8Z" fill="#3a3a3a" stroke="#c8c8c8" stroke-width="1.1"/><circle cx="6.8" cy="4.3" r="2.4" fill="#c8c8c8"/><circle cx="7.3" cy="3.8" r="0.9" fill="#484848"/></svg><div style="left:1750px;top:221.6px;width:3px;height:17px;background:#4b8df0;"></div><div class="t" style="left:1779px;top:223.9px;line-height:14px;font-size:9.5px;color:#ececec;letter-spacing:-0.25px;">&lt;Quadrat&gt;</div><div style="left:1893px;top:226.6px;width:7px;height:7px;background:#6d9cf8;border:1px solid #1e1e1e;"></div><div style="left:1712px;top:257.6px;width:194px;height:1px;background:#3a3a3a;"></div><svg style="left:1715.5px;top:245.6px;" width="13" height="9" viewBox="0 0 13 9"><path d="M0.5 4.8C3 0.5 10 0.5 12.5 4.8C10 8.8 3 8.8 0.5 4.8Z" fill="#3a3a3a" stroke="#c8c8c8" stroke-width="1.1"/><circle cx="6.8" cy="4.3" r="2.4" fill="#c8c8c8"/><circle cx="7.3" cy="3.8" r="0.9" fill="#484848"/></svg><div style="left:1750px;top:240.6px;width:3px;height:17px;background:#4b8df0;"></div><div class="t" style="left:1779px;top:242.9px;line-height:14px;font-size:9.5px;color:#ececec;letter-spacing:-0.25px;">&lt;Quadrat&gt;</div><div style="left:1893px;top:245.6px;width:7px;height:7px;background:#6d9cf8;border:1px solid #1e1e1e;"></div><div style="left:1712px;top:276.6px;width:194px;height:1px;background:#3a3a3a;"></div><svg style="left:1715.5px;top:264.6px;" width="13" height="9" viewBox="0 0 13 9"><path d="M0.5 4.8C3 0.5 10 0.5 12.5 4.8C10 8.8 3 8.8 0.5 4.8Z" fill="#3a3a3a" stroke="#c8c8c8" stroke-width="1.1"/><circle cx="6.8" cy="4.3" r="2.4" fill="#c8c8c8"/><circle cx="7.3" cy="3.8" r="0.9" fill="#484848"/></svg><div style="left:1750px;top:259.6px;width:3px;height:17px;background:#4b8df0;"></div><div class="t" style="left:1779px;top:261.90000000000003px;line-height:14px;font-size:9.5px;color:#ececec;letter-spacing:-0.25px;">&lt;Quadrat&gt;</div><div style="left:1893px;top:264.6px;width:7px;height:7px;background:#6d9cf8;border:1px solid #1e1e1e;"></div><div style="left:1712px;top:295.6px;width:194px;height:1px;background:#3a3a3a;"></div><svg style="left:1715.5px;top:283.6px;" width="13" height="9" viewBox="0 0 13 9"><path d="M0.5 4.8C3 0.5 10 0.5 12.5 4.8C10 8.8 3 8.8 0.5 4.8Z" fill="#3a3a3a" stroke="#c8c8c8" stroke-width="1.1"/><circle cx="6.8" cy="4.3" r="2.4" fill="#c8c8c8"/><circle cx="7.3" cy="3.8" r="0.9" fill="#484848"/></svg><div style="left:1750px;top:278.6px;width:3px;height:17px;background:#4b8df0;"></div><div class="t" style="left:1779px;top:280.90000000000003px;line-height:14px;font-size:9.5px;color:#ececec;letter-spacing:-0.25px;">&lt;Quadrat&gt;</div><div style="left:1893px;top:283.6px;width:7px;height:7px;background:#6d9cf8;border:1px solid #1e1e1e;"></div><div style="left:1712px;top:314.6px;width:194px;height:1px;background:#3a3a3a;"></div><svg style="left:1715.5px;top:302.6px;" width="13" height="9" viewBox="0 0 13 9"><path d="M0.5 4.8C3 0.5 10 0.5 12.5 4.8C10 8.8 3 8.8 0.5 4.8Z" fill="#3a3a3a" stroke="#c8c8c8" stroke-width="1.1"/><circle cx="6.8" cy="4.3" r="2.4" fill="#c8c8c8"/><circle cx="7.3" cy="3.8" r="0.9" fill="#484848"/></svg><div style="left:1750px;top:297.6px;width:3px;height:17px;background:#4b8df0;"></div><div class="t" style="left:1779px;top:299.90000000000003px;line-height:14px;font-size:9.5px;color:#ececec;letter-spacing:-0.25px;">&lt;Rechteck&gt;</div><div style="left:1893px;top:302.6px;width:7px;height:7px;background:#6d9cf8;border:1px solid #1e1e1e;"></div><div style="left:1712px;top:333.6px;width:194px;height:1px;background:#3a3a3a;"></div><svg style="left:1715.5px;top:321.6px;" width="13" height="9" viewBox="0 0 13 9"><path d="M0.5 4.8C3 0.5 10 0.5 12.5 4.8C10 8.8 3 8.8 0.5 4.8Z" fill="#3a3a3a" stroke="#c8c8c8" stroke-width="1.1"/><circle cx="6.8" cy="4.3" r="2.4" fill="#c8c8c8"/><circle cx="7.3" cy="3.8" r="0.9" fill="#484848"/></svg><div style="left:1750px;top:316.6px;width:3px;height:17px;background:#4b8df0;"></div><div class="t" style="left:1779px;top:318.90000000000003px;line-height:14px;font-size:9.5px;color:#ececec;letter-spacing:-0.25px;">&lt;Quadrat&gt;</div><div style="left:1893px;top:321.6px;width:7px;height:7px;background:#6d9cf8;border:1px solid #1e1e1e;"></div><div style="left:1732px;top:106px;width:1px;height:228px;background:#3a3a3a;"></div><div style="left:1749px;top:106px;width:1px;height:228px;background:#3a3a3a;"></div><div style="left:1906px;top:105px;width:14px;height:229px;background:#2f2f2f;"></div><div style="left:1906px;top:105px;width:14px;height:17.5px;background:#2a2a2a;"></div><svg style="left:1909.3px;top:112.5px;" width="7" height="4" viewBox="0 0 7 4"><path d="M0 4H7L3.5 0Z" fill="#e0e0e0"/></svg><div style="left:1907px;top:123px;width:12px;height:101px;background:#8c8c8c;"></div><svg style="left:1909.3px;top:325px;" width="7" height="4" viewBox="0 0 7 4"><path d="M0 0H7L3.5 4Z" fill="#e0e0e0"/></svg><div style="left:1712px;top:334px;width:208px;height:18px;background:#484848;border-top:1px solid #2b2b2b;"></div><div class="t" style="left:1715.5px;top:337.0px;line-height:14px;font-size:9.5px;color:#e0e0e0;letter-spacing:-0.25px;">Seite: 1, 2 Ebenen</div><svg style="left:1854px;top:338.5px;" width="11" height="11" viewBox="0 0 11 11"><path d="M0 0H10.5V10.5H4.5V5.5H0Z" fill="#dcdcdc"/><path d="M0.4 6H4V10Z" fill="#dcdcdc" opacity="0.85"/></svg><svg style="left:1883px;top:338px;" width="11" height="12" viewBox="0 0 11 12"><path d="M0.5 2.5H10.5M4 2.2V0.8H7V2.2" fill="none" stroke="#d0d0d0" stroke-width="1.1"/><path d="M1.5 4H9.5L8.8 11.5H2.2Z" fill="none" stroke="#d0d0d0" stroke-width="1"/><path d="M3.8 5V10.5M5.5 5V10.5M7.2 5V10.5" stroke="#d0d0d0" stroke-width="0.9"/></svg><svg style="left:1908px;top:341px;shape-rendering:crispEdges;" width="10" height="10" viewBox="0 0 10 10"><rect x="8" y="0" width="1" height="1" fill="#222"/><rect x="8" y="2" width="1" height="1" fill="#222"/><rect x="6" y="2" width="1" height="1" fill="#222"/><rect x="8" y="4" width="1" height="1" fill="#222"/><rect x="6" y="4" width="1" height="1" fill="#222"/><rect x="4" y="4" width="1" height="1" fill="#222"/><rect x="8" y="6" width="1" height="1" fill="#222"/><rect x="6" y="6" width="1" height="1" fill="#222"/><rect x="4" y="6" width="1" height="1" fill="#222"/><rect x="2" y="6" width="1" height="1" fill="#222"/><rect x="8" y="8" width="1" height="1" fill="#222"/><rect x="6" y="8" width="1" height="1" fill="#222"/><rect x="4" y="8" width="1" height="1" fill="#222"/><rect x="2" y="8" width="1" height="1" fill="#222"/><rect x="0" y="8" width="1" height="1" fill="#222"/></svg><div style="left:1712px;top:352px;width:208px;height:1.5px;background:#2b2b2b;"></div><div style="left:1712px;top:353.5px;width:208px;height:17px;background:#333333;border-bottom:1px solid #2b2b2b;"></div><div style="left:1712px;top:353.5px;width:49px;height:16px;background:#3c3c3c;border-right:1px solid #2b2b2b;"></div><div class="t" style="left:1719.5px;top:354.8px;line-height:14px;font-size:10.5px;color:#a2a2a2;font-weight:bold;letter-spacing:0.05px;">Kontur</div><div style="left:1761px;top:353.5px;width:57px;height:17px;background:#484848;border-right:1px solid #2b2b2b;"></div><svg style="left:1766.0px;top:357.0px;" width="6" height="10" viewBox="0 0 6 10"><path d="M0.6 3.8L3 1L5.4 3.8M0.6 6.2L3 9L5.4 6.2" fill="none" stroke="#d8d8d8" stroke-width="1.1"/></svg><div class="t" style="left:1774.5px;top:354.8px;line-height:14px;font-size:10.5px;color:#ececec;font-weight:bold;letter-spacing:-0.15px;">Verlauf</div><svg style="left:1901px;top:357.5px;shape-rendering:crispEdges;" width="14" height="9" viewBox="0 0 14 9"><path d="M0 3H5L2.5 5.8Z" fill="#d0d0d0"/><path d="M6 1H14M6 3.3H14M6 5.6H14M6 8H14" stroke="#d0d0d0" stroke-width="1"/></svg><div style="left:1717px;top:377.8px;width:28.3px;height:28.3px;background:linear-gradient(90deg,#fafafa,#111);border:1px solid #8e8e8e;box-shadow:0 1px 1px rgba(0,0,0,.4);"></div><div class="t" style="left:1700px;top:380.5px;line-height:14px;font-size:9.5px;color:#e0e0e0;width:99px;text-align:right;letter-spacing:-0.25px;">Typ:</div><div style="left:1803.5px;top:381px;width:100px;height:13px;background:#5c5c5c;border:1px solid #2b2b2b;"></div><div style="left:1889px;top:382px;width:1px;height:11px;background:#3a3a3a;"></div><svg style="left:1892.5px;top:385px;" width="8" height="5" viewBox="0 0 8 5"><path d="M0 0H8L4 5Z" fill="#dcdcdc"/></svg><div class="t" style="left:1700px;top:401.0px;line-height:14px;font-size:9.5px;color:#e0e0e0;width:99px;text-align:right;letter-spacing:-0.25px;">Winkel:</div><div style="left:1803.5px;top:401px;width:30.5px;height:12.8px;background:#a6a6a6;border:1px solid #2b2b2b;box-shadow:inset 0 1px 1px rgba(0,0,0,.22);"></div><div class="t" style="left:1836px;top:401.0px;line-height:14px;font-size:9.5px;color:#e0e0e0;letter-spacing:-0.25px;">o</div><div class="t" style="left:1700px;top:421.0px;line-height:14px;font-size:9.5px;color:#e0e0e0;width:99px;text-align:right;letter-spacing:-0.25px;">Position:</div><div style="left:1803.5px;top:421px;width:30.5px;height:12.8px;background:#a6a6a6;border:1px solid #2b2b2b;box-shadow:inset 0 1px 1px rgba(0,0,0,.22);"></div><div class="t" style="left:1836px;top:421.0px;line-height:14px;font-size:9.5px;color:#e0e0e0;letter-spacing:-0.25px;">%</div><div class="t" style="left:1700px;top:443.0px;line-height:14px;font-size:9.5px;color:#e0e0e0;width:96.5px;text-align:right;letter-spacing:-0.25px;">Umkehren</div><svg style="left:1807px;top:441px;" width="17" height="15" viewBox="0 0 17 15"><rect x="0.5" y="1.5" width="6" height="5" fill="none" stroke="#dcdcdc"/><rect x="9.5" y="9" width="6" height="5" fill="#bdbdbd" stroke="#dcdcdc"/><path d="M9 2.5H13V6M11.2 4.5L13 6.5L14.8 4.5" fill="none" stroke="#dcdcdc"/><path d="M7 12.5H3V9M1.2 10.5L3 8.5L4.8 10.5" fill="none" stroke="#dcdcdc"/></svg><div style="left:1721px;top:473.5px;width:184px;height:8.5px;background:linear-gradient(90deg,#fff,#000);border:1px solid #1c1c1c;"></div><div style="left:1712px;top:503px;width:208px;height:3px;background:#2b2b2b;"></div><div style="left:1712px;top:506px;width:208px;height:17px;background:#333333;border-bottom:1px solid #2b2b2b;"></div><div style="left:1712px;top:506px;width:55px;height:17px;background:#484848;border-right:1px solid #2b2b2b;"></div><svg style="left:1717.0px;top:509.5px;" width="6" height="10" viewBox="0 0 6 10"><path d="M0.6 3.8L3 1L5.4 3.8M0.6 6.2L3 9L5.4 6.2" fill="none" stroke="#d8d8d8" stroke-width="1.1"/></svg><div class="t" style="left:1725.5px;top:507.29999999999995px;line-height:14px;font-size:10.5px;color:#ececec;font-weight:bold;letter-spacing:-0.15px;">Effekte</div><div style="left:1767px;top:506px;width:89px;height:16px;background:#3c3c3c;border-right:1px solid #2b2b2b;"></div><div class="t" style="left:1774px;top:507.29999999999995px;line-height:14px;font-size:10.5px;color:#a2a2a2;font-weight:bold;letter-spacing:0.33px;">Objektformate</div><svg style="left:1901px;top:510px;shape-rendering:crispEdges;" width="14" height="9" viewBox="0 0 14 9"><path d="M0 3H5L2.5 5.8Z" fill="#d0d0d0"/><path d="M6 1H14M6 3.3H14M6 5.6H14M6 8H14" stroke="#d0d0d0" stroke-width="1"/></svg><div style="left:1714.5px;top:531px;width:98.5px;height:13.3px;background:linear-gradient(#626262,#545454);border:1px solid #2b2b2b;"></div><div class="t" style="left:1717px;top:531.0px;line-height:14px;font-size:9.5px;color:#ececec;letter-spacing:-0.25px;">Normal</div><div style="left:1799px;top:532.5px;width:1px;height:10.5px;background:#3a3a3a;"></div><svg style="left:1802.5px;top:535.5px;" width="8" height="5" viewBox="0 0 8 5"><path d="M0 0H8L4 5Z" fill="#e0e0e0"/></svg><div class="t" style="left:1823.5px;top:531.5px;line-height:14px;font-size:9.5px;color:#e0e0e0;letter-spacing:-0.25px;">Deckkraft:</div><div style="left:1866.7px;top:531px;width:37.5px;height:13.3px;background:#a6a6a6;border:1px solid #2b2b2b;box-shadow:inset 0 1px 1px rgba(0,0,0,.22);"></div><div class="t" style="left:1869.7px;top:531.15px;line-height:14px;font-size:9.5px;color:#161616;letter-spacing:-0.25px;">100 %</div><div style="left:1903.2px;top:531px;width:15px;height:13.3px;background:#5e5e5e;border:1px solid #2b2b2b;"></div><svg style="left:1908px;top:534.5px;" width="5" height="8" viewBox="0 0 5 8"><path d="M0 0L5 4L0 8Z" fill="#e4e4e4"/></svg><div style="left:1712px;top:552.2px;width:208px;height:18.399999999999977px;background:#4a556d;"></div><svg style="left:1715px;top:558.7px;" width="9" height="6" viewBox="0 0 9 6"><path d="M0 0H9L4.5 5.5Z" fill="#d8d8d8"/></svg><div class="t" style="left:1727px;top:555.3000000000001px;line-height:14px;font-size:9.5px;color:#fff;font-weight:bold;letter-spacing:-0.25px;">Objekt:</div><div class="t" style="left:1798px;top:555.3000000000001px;line-height:14px;font-size:9.5px;color:#fff;font-weight:bold;letter-spacing:-0.25px;">Normal 100 %</div><div style="left:1712px;top:569.6px;width:208px;height:1px;background:#3a3a3a;"></div><div class="t" style="left:1732px;top:574.5px;line-height:14px;font-size:9.5px;color:#e0e0e0;letter-spacing:-0.25px;">Kontur:</div><div class="t" style="left:1798px;top:574.5px;line-height:14px;font-size:9.5px;color:#e6e6e6;letter-spacing:-0.25px;">Normal 100 %</div><div style="left:1712px;top:589.6px;width:208px;height:1px;background:#3a3a3a;"></div><div class="t" style="left:1732px;top:594.4499999999999px;line-height:14px;font-size:9.5px;color:#e0e0e0;letter-spacing:-0.25px;">Fläche:</div><div class="t" style="left:1798px;top:594.4499999999999px;line-height:14px;font-size:9.5px;color:#e6e6e6;letter-spacing:-0.25px;">Normal 100 %</div><div style="left:1712px;top:609.5px;width:208px;height:1px;background:#3a3a3a;"></div><div class="t" style="left:1732px;top:614.4px;line-height:14px;font-size:9.5px;color:#969696;letter-spacing:-0.25px;">Text:</div><div class="t" style="left:1798px;top:614.4px;line-height:14px;font-size:9.5px;color:#e6e6e6;letter-spacing:-0.25px;"></div><div style="left:1712px;top:629.5px;width:208px;height:1px;background:#3a3a3a;"></div><div style="left:1716px;top:635.5px;width:10.5px;height:10.5px;background:#5c5c5c;border:1px solid #303030;"></div><div class="t" style="left:1731px;top:634.0px;line-height:14px;font-size:9.5px;color:#e0e0e0;letter-spacing:-0.25px;">Füllmeth. isolieren</div><div style="left:1818px;top:635.5px;width:10.5px;height:10.5px;background:#5c5c5c;border:1px solid #303030;"></div><div class="t" style="left:1833.5px;top:634.0px;line-height:14px;font-size:9.5px;color:#e0e0e0;letter-spacing:-0.25px;">Aussparungsgr.</div><div style="left:1712px;top:651.5px;width:208px;height:1px;background:#3a3a3a;"></div><svg style="left:1824.5px;top:655.5px;" width="10.5" height="10.5" viewBox="0 0 10.5 10.5"><rect x="0" y="0" width="10.5" height="10.5" fill="#8c8c8c"/><rect x="0" y="0" width="3.5" height="3.5" fill="#6a6a6a"/><rect x="7" y="0" width="3.5" height="3.5" fill="#6a6a6a"/><rect x="3.5" y="3.5" width="3.5" height="3.5" fill="#6a6a6a"/><rect x="0" y="7" width="3.5" height="3.5" fill="#6a6a6a"/><rect x="7" y="7" width="3.5" height="3.5" fill="#6a6a6a"/><path d="M0.5 10L10 0.5" stroke="#d84030" stroke-width="1.4"/></svg><div class="t" style="left:1853.5px;top:653.5px;line-height:14px;font-size:13px;color:#d0d0d0;font-style:italic;letter-spacing:-0.3px;">fx</div><svg style="left:1864.5px;top:665px;" width="4" height="3" viewBox="0 0 4 3"><path d="M0 0H4L2 2.5Z" fill="#c8c8c8"/></svg><svg style="left:1884px;top:656px;" width="11" height="12" viewBox="0 0 11 12"><path d="M0.5 2.5H10.5M4 2.2V0.8H7V2.2" fill="none" stroke="#7c7c7c" stroke-width="1.1"/><path d="M1.5 4H9.5L8.8 11.5H2.2Z" fill="none" stroke="#7c7c7c" stroke-width="1"/><path d="M3.8 5V10.5M5.5 5V10.5M7.2 5V10.5" stroke="#7c7c7c" stroke-width="0.9"/></svg><div style="left:1712px;top:669px;width:208px;height:2.5px;background:#2b2b2b;"></div><div style="left:1712px;top:671.5px;width:208px;height:17px;background:#333333;border-bottom:1px solid #2b2b2b;"></div><div style="left:1712px;top:671.5px;width:95px;height:17px;background:#484848;border-right:1px solid #2b2b2b;"></div><svg style="left:1717.0px;top:675.0px;" width="6" height="10" viewBox="0 0 6 10"><path d="M0.6 3.8L3 1L5.4 3.8M0.6 6.2L3 9L5.4 6.2" fill="none" stroke="#d8d8d8" stroke-width="1.1"/></svg><div class="t" style="left:1725.5px;top:672.8px;line-height:14px;font-size:10.5px;color:#ececec;font-weight:bold;letter-spacing:0.15px;">Absatzformate</div><svg style="left:1901px;top:675.5px;shape-rendering:crispEdges;" width="14" height="9" viewBox="0 0 14 9"><path d="M0 3H5L2.5 5.8Z" fill="#d0d0d0"/><path d="M6 1H14M6 3.3H14M6 5.6H14M6 8H14" stroke="#d0d0d0" stroke-width="1"/></svg><div class="t" style="left:1713.5px;top:693.0px;line-height:14px;font-size:9.5px;color:#e4e4e4;letter-spacing:-0.25px;">(Keine Formate)</div><svg style="left:1905px;top:692.5px;" width="9" height="14" viewBox="0 0 9 14"><path d="M5 0L0.8 7.5H4L2.5 13.5L8.2 5.2H4.8L7 0Z" fill="#d0d0d0"/></svg><div style="left:1712px;top:709.5px;width:208px;height:1px;background:#2b2b2b;"></div><div class="t" style="left:1744px;top:714.5px;line-height:14px;font-size:9.5px;color:#e4e4e4;letter-spacing:-0.25px;">[Einf. Abs.]</div><div style="left:1712px;top:729.5px;width:195px;height:1px;background:#3a3a3a;"></div><div style="left:1907px;top:710.5px;width:13px;height:158.5px;background:#3a3a3a;"></div><svg style="left:1909px;top:715px;" width="9" height="5" viewBox="0 0 9 5"><path d="M0 5H9L4.5 0Z" fill="#7a7a7a"/></svg><svg style="left:1909px;top:861px;" width="9" height="5" viewBox="0 0 9 5"><path d="M0 0H9L4.5 5Z" fill="#7a7a7a"/></svg><div style="left:1712px;top:869px;width:208px;height:1px;background:#2b2b2b;"></div><svg style="left:1791px;top:873px;" width="13" height="11" viewBox="0 0 13 11"><path d="M0.5 1.5Q0.5 0.5 1.5 0.5H5L6.5 2.2H11.5Q12.5 2.2 12.5 3.2V9.5Q12.5 10.5 11.5 10.5H1.5Q0.5 10.5 0.5 9.5Z" fill="#c4c4c4"/></svg><div class="t" style="left:1819px;top:871.5px;line-height:14px;font-size:12px;color:#7a7a7a;">¶</div><svg style="left:1827px;top:872.5px;" width="9" height="9" viewBox="0 0 9 9"><path d="M1 8L7.5 1M1.5 2.5L7 7M0.5 5H8.5" stroke="#7a7a7a" stroke-width="0.9"/></svg><svg style="left:1851px;top:873px;" width="11" height="11" viewBox="0 0 11 11"><path d="M0 0H10.5V10.5H4.5V5.5H0Z" fill="#dcdcdc"/><path d="M0.4 6H4V10Z" fill="#dcdcdc" opacity="0.85"/></svg><svg style="left:1881px;top:872.5px;" width="11" height="12" viewBox="0 0 11 12"><path d="M0.5 2.5H10.5M4 2.2V0.8H7V2.2" fill="none" stroke="#7c7c7c" stroke-width="1.1"/><path d="M1.5 4H9.5L8.8 11.5H2.2Z" fill="none" stroke="#7c7c7c" stroke-width="1"/><path d="M3.8 5V10.5M5.5 5V10.5M7.2 5V10.5" stroke="#7c7c7c" stroke-width="0.9"/></svg><svg style="left:1908px;top:876px;shape-rendering:crispEdges;" width="10" height="10" viewBox="0 0 10 10"><rect x="8" y="0" width="1" height="1" fill="#222"/><rect x="8" y="2" width="1" height="1" fill="#222"/><rect x="6" y="2" width="1" height="1" fill="#222"/><rect x="8" y="4" width="1" height="1" fill="#222"/><rect x="6" y="4" width="1" height="1" fill="#222"/><rect x="4" y="4" width="1" height="1" fill="#222"/><rect x="8" y="6" width="1" height="1" fill="#222"/><rect x="6" y="6" width="1" height="1" fill="#222"/><rect x="4" y="6" width="1" height="1" fill="#222"/><rect x="2" y="6" width="1" height="1" fill="#222"/><rect x="8" y="8" width="1" height="1" fill="#222"/><rect x="6" y="8" width="1" height="1" fill="#222"/><rect x="4" y="8" width="1" height="1" fill="#222"/><rect x="2" y="8" width="1" height="1" fill="#222"/><rect x="0" y="8" width="1" height="1" fill="#222"/></svg><div style="left:1712px;top:887.5px;width:208px;height:2.5px;background:#2b2b2b;"></div><div style="left:1712px;top:890px;width:208px;height:17px;background:#333333;border-bottom:1px solid #2b2b2b;"></div><div style="left:1712px;top:890px;width:99px;height:17px;background:#484848;border-right:1px solid #2b2b2b;"></div><svg style="left:1717.0px;top:893.5px;" width="6" height="10" viewBox="0 0 6 10"><path d="M0.6 3.8L3 1L5.4 3.8M0.6 6.2L3 9L5.4 6.2" fill="none" stroke="#d8d8d8" stroke-width="1.1"/></svg><div class="t" style="left:1725.5px;top:891.3px;line-height:14px;font-size:10.5px;color:#ececec;font-weight:bold;letter-spacing:0.1px;">Zeichenformate</div><svg style="left:1901px;top:894px;shape-rendering:crispEdges;" width="14" height="9" viewBox="0 0 14 9"><path d="M0 3H5L2.5 5.8Z" fill="#d0d0d0"/><path d="M6 1H14M6 3.3H14M6 5.6H14M6 8H14" stroke="#d0d0d0" stroke-width="1"/></svg><div class="t" style="left:1713.5px;top:912.0px;line-height:14px;font-size:9.5px;color:#e4e4e4;letter-spacing:-0.25px;">(Keine Formate)</div><svg style="left:1905px;top:911.5px;" width="9" height="14" viewBox="0 0 9 14"><path d="M5 0L0.8 7.5H4L2.5 13.5L8.2 5.2H4.8L7 0Z" fill="#d0d0d0"/></svg><div style="left:1712px;top:929px;width:208px;height:1px;background:#2b2b2b;"></div><div style="left:1712px;top:930px;width:195px;height:18.5px;background:#4a556d;"></div><div class="t" style="left:1744px;top:933.4px;line-height:14px;font-size:9.5px;color:#fff;font-weight:bold;letter-spacing:-0.25px;">[Ohne]</div><svg style="left:1891px;top:933.5px;" width="12" height="12" viewBox="0 0 12 12"><path d="M0.8 0.8L11 11" stroke="#d4d4d4" stroke-width="1.1"/><path d="M9.2 0.6L11.4 2.8L9.6 4.6L7.4 2.4Z" fill="#d4d4d4"/><path d="M6.8 3L9 5.2L3.2 10.6L0.8 11.4L1.6 8.8Z" fill="#d4d4d4" fill-opacity="0.55" stroke="#d4d4d4" stroke-width="0.9"/><circle cx="9.6" cy="2.4" r="1.7" fill="#d4d4d4"/></svg><div style="left:1907px;top:930px;width:13px;height:18.5px;background:#3a3a3a;"></div><svg style="left:1910px;top:933px;" width="7" height="4" viewBox="0 0 7 4"><path d="M0 4H7L3.5 0Z" fill="#7a7a7a"/></svg><svg style="left:1910px;top:942px;" width="7" height="4" viewBox="0 0 7 4"><path d="M0 0H7L3.5 4Z" fill="#7a7a7a"/></svg><div style="left:1712px;top:948.5px;width:208px;height:1px;background:#2b2b2b;"></div><svg style="left:1821px;top:952.5px;" width="13" height="11" viewBox="0 0 13 11"><path d="M0.5 1.5Q0.5 0.5 1.5 0.5H5L6.5 2.2H11.5Q12.5 2.2 12.5 3.2V9.5Q12.5 10.5 11.5 10.5H1.5Q0.5 10.5 0.5 9.5Z" fill="#c4c4c4"/></svg><svg style="left:1851px;top:952.5px;" width="11" height="11" viewBox="0 0 11 11"><path d="M0 0H10.5V10.5H4.5V5.5H0Z" fill="#dcdcdc"/><path d="M0.4 6H4V10Z" fill="#dcdcdc" opacity="0.85"/></svg><svg style="left:1881px;top:952px;" width="11" height="12" viewBox="0 0 11 12"><path d="M0.5 2.5H10.5M4 2.2V0.8H7V2.2" fill="none" stroke="#7c7c7c" stroke-width="1.1"/><path d="M1.5 4H9.5L8.8 11.5H2.2Z" fill="none" stroke="#7c7c7c" stroke-width="1"/><path d="M3.8 5V10.5M5.5 5V10.5M7.2 5V10.5" stroke="#7c7c7c" stroke-width="0.9"/></svg><div style="left:1712px;top:967px;width:208px;height:2px;background:#2b2b2b;"></div><svg style="left:1698px;top:101.2px;" width="8" height="5" viewBox="0 0 8 5"><path d="M0 5H8L4.0 0Z" fill="#e4e4e4"/></svg><div style="left:1695px;top:791px;width:14px;height:74px;background:#8c8c8c;"></div><svg style="left:1697px;top:955.5px;" width="10" height="6" viewBox="0 0 10 6"><path d="M0 0H10L5.0 6Z" fill="#e4e4e4"/></svg>
<div style="left:1124px;top:282px;width:209px;height:304px;background:#484848;border-radius:4px 4px 0 0;box-shadow:0 3px 10px rgba(0,0,0,.45),0 0 1px rgba(0,0,0,.6);"></div><div style="left:1124px;top:282px;width:209px;height:14px;background:#2f2f2f;border-radius:4px 4px 0 0;"></div><svg style="left:1130px;top:286.5px;" width="6" height="6" viewBox="0 0 6 6"><path d="M0.7 0.7L5.3 5.3M5.3 0.7L0.7 5.3" stroke="#e0e0e0" stroke-width="1.3"/></svg><svg style="left:1320px;top:286.5px;" width="8" height="6" viewBox="0 0 8 6"><path d="M3.5 0L0 3L3.5 6ZM7.5 0L4 3L7.5 6Z" fill="#d0d0d0"/></svg><div style="left:1124px;top:296px;width:209px;height:17px;background:#333333;border-bottom:1px solid #2b2b2b;"></div><div style="left:1124px;top:296px;width:73px;height:17px;background:#484848;border-right:1px solid #2b2b2b;"></div><svg style="left:1129.5px;top:299.5px;" width="6" height="10" viewBox="0 0 6 10"><path d="M0.6 3.8L3 1L5.4 3.8M0.6 6.2L3 9L5.4 6.2" fill="none" stroke="#d8d8d8" stroke-width="1.1"/></svg><div class="t" style="left:1138.5px;top:297.2px;line-height:14px;font-size:10.5px;color:#ececec;font-weight:bold;letter-spacing:0.05px;">Farbfelder</div><svg style="left:1314px;top:300px;shape-rendering:crispEdges;" width="14" height="9" viewBox="0 0 14 9"><path d="M0 3H5L2.5 5.8Z" fill="#d0d0d0"/><path d="M6 1H14M6 3.3H14M6 5.6H14M6 8H14" stroke="#d0d0d0" stroke-width="1"/></svg><div style="left:1139px;top:324px;width:10px;height:10px;background:#fff;border:1px solid #2a2a2a;box-shadow:0 0 0 1px #d0d0d0;"></div><svg style="left:1139px;top:324px;" width="10" height="10" viewBox="0 0 10 10"><path d="M1.5 8.5L8.5 1.5" stroke="#ee2010" stroke-width="1.8"/></svg><div style="left:1130.5px;top:316.5px;width:11px;height:11px;background:#fff;box-shadow:0 0 0 1px #3a3a3a;"></div><svg style="left:1143.5px;top:316px;" width="6" height="6" viewBox="0 0 6 6"><path d="M0.8 2H3.5A1.5 1.5 0 0 1 5 3.8V5.5" fill="none" stroke="#d8d8d8" stroke-width="0.9"/><path d="M2 0.3L0.4 2L2 3.7" fill="none" stroke="#d8d8d8" stroke-width="0.8"/></svg><div style="left:1162px;top:320.5px;width:13px;height:12px;background:#2d2d2d;"></div><div style="left:1164.5px;top:322.5px;width:8px;height:8px;background:#6e6e6e;border:1px solid #d0d0d0;"></div><div class="t" style="left:1178.5px;top:321.0px;line-height:12px;font-size:12px;color:#8a8a8a;font-weight:bold;font-family:'Liberation Serif',serif;">T</div><div class="t" style="left:1218.5px;top:320.0px;line-height:14px;font-size:9.5px;color:#e0e0e0;letter-spacing:-0.25px;">Farbton:</div><div style="left:1256.5px;top:318.5px;width:30.5px;height:13px;background:#a6a6a6;border:1px solid #2b2b2b;box-shadow:inset 0 1px 1px rgba(0,0,0,.22);"></div><div class="t" style="left:1260px;top:318.5px;line-height:14px;font-size:9.5px;color:#5c5c5c;letter-spacing:-0.25px;">100</div><div style="left:1286px;top:318.5px;width:14px;height:13px;background:#5c5c5c;border:1px solid #2b2b2b;"></div><svg style="left:1291px;top:321.5px;" width="5" height="7" viewBox="0 0 5 7"><path d="M0 0L5 3.5L0 7Z" fill="#8e8e8e"/></svg><div class="t" style="left:1303px;top:320.0px;line-height:14px;font-size:9.5px;color:#e0e0e0;letter-spacing:-0.25px;">%</div><div style="left:1124px;top:338px;width:209px;height:1px;background:#2b2b2b;"></div><div style="left:1124px;top:358px;width:195px;height:1px;background:#3a3a3a;"></div><div style="left:1140px;top:342px;width:13px;height:13px;background:#fff;border:1px solid #111;"></div><svg style="left:1140px;top:342px;" width="13" height="13" viewBox="0 0 13 13"><path d="M1.5 11.5L11.5 1.5" stroke="#ee2010" stroke-width="1.6"/></svg><div class="t" style="left:1155.5px;top:342.8px;line-height:14px;font-size:9.5px;color:#e6e6e6;letter-spacing:-0.25px;">[Ohne]</div><svg style="left:1271.5px;top:343px;" width="12" height="12" viewBox="0 0 12 12"><path d="M0.8 0.8L11 11" stroke="#d4d4d4" stroke-width="1.1"/><path d="M9.2 0.6L11.4 2.8L9.6 4.6L7.4 2.4Z" fill="#d4d4d4"/><path d="M6.8 3L9 5.2L3.2 10.6L0.8 11.4L1.6 8.8Z" fill="#d4d4d4" fill-opacity="0.55" stroke="#d4d4d4" stroke-width="0.9"/><circle cx="9.6" cy="2.4" r="1.7" fill="#d4d4d4"/></svg><svg style="left:1303px;top:343.5px;" width="11" height="11" viewBox="0 0 11 11"><rect x="0" y="0" width="11" height="11" fill="#d8d8d8"/><path d="M1.5 9.5L9.5 1.5" stroke="#e83020" stroke-width="1.3"/></svg><div style="left:1124px;top:359px;width:195px;height:20px;background:#4a556d;"></div><div style="left:1124px;top:378px;width:195px;height:1px;background:#3a3a3a;"></div><div style="left:1140px;top:362px;width:13px;height:13px;background:#fff;border:1px solid #111;"></div><div class="t" style="left:1155.5px;top:362.8px;line-height:14px;font-size:9.5px;color:#fff;font-weight:bold;letter-spacing:-0.25px;">[Papier]</div><div style="left:1124px;top:398px;width:195px;height:1px;background:#3a3a3a;"></div><div style="left:1140px;top:382px;width:13px;height:13px;background:#000;border:1px solid #111;"></div><div class="t" style="left:1155.5px;top:382.8px;line-height:14px;font-size:9.5px;color:#e6e6e6;letter-spacing:-0.25px;">[Schwarz]</div><svg style="left:1271.5px;top:383px;" width="12" height="12" viewBox="0 0 12 12"><path d="M0.8 0.8L11 11" stroke="#d4d4d4" stroke-width="1.1"/><path d="M9.2 0.6L11.4 2.8L9.6 4.6L7.4 2.4Z" fill="#d4d4d4"/><path d="M6.8 3L9 5.2L3.2 10.6L0.8 11.4L1.6 8.8Z" fill="#d4d4d4" fill-opacity="0.55" stroke="#d4d4d4" stroke-width="0.9"/><circle cx="9.6" cy="2.4" r="1.7" fill="#d4d4d4"/></svg><svg style="left:1287px;top:383.5px;" width="11" height="11" viewBox="0 0 11 11"><rect x="0" y="0" width="11" height="11" fill="#dcdcdc"/><rect x="1" y="1" width="9" height="9" fill="#b8b8b8"/><circle cx="1.75" cy="1.75" r="0.55" fill="#3c3c3c"/><circle cx="1.75" cy="3.25" r="0.55" fill="#3c3c3c"/><circle cx="1.75" cy="4.75" r="0.55" fill="#3c3c3c"/><circle cx="1.75" cy="6.25" r="0.55" fill="#3c3c3c"/><circle cx="1.75" cy="7.75" r="0.55" fill="#3c3c3c"/><circle cx="1.75" cy="9.25" r="0.55" fill="#3c3c3c"/><circle cx="3.25" cy="1.75" r="0.55" fill="#3c3c3c"/><circle cx="3.25" cy="3.25" r="0.55" fill="#3c3c3c"/><circle cx="3.25" cy="4.75" r="0.55" fill="#3c3c3c"/><circle cx="3.25" cy="6.25" r="0.55" fill="#3c3c3c"/><circle cx="3.25" cy="7.75" r="0.55" fill="#3c3c3c"/><circle cx="3.25" cy="9.25" r="0.55" fill="#3c3c3c"/><circle cx="4.75" cy="1.75" r="0.55" fill="#3c3c3c"/><circle cx="4.75" cy="3.25" r="0.55" fill="#3c3c3c"/><circle cx="4.75" cy="4.75" r="0.55" fill="#3c3c3c"/><circle cx="4.75" cy="6.25" r="0.55" fill="#3c3c3c"/><circle cx="4.75" cy="7.75" r="0.55" fill="#3c3c3c"/><circle cx="4.75" cy="9.25" r="0.55" fill="#3c3c3c"/><circle cx="6.25" cy="1.75" r="0.55" fill="#3c3c3c"/><circle cx="6.25" cy="3.25" r="0.55" fill="#3c3c3c"/><circle cx="6.25" cy="4.75" r="0.55" fill="#3c3c3c"/><circle cx="6.25" cy="6.25" r="0.55" fill="#3c3c3c"/><circle cx="6.25" cy="7.75" r="0.55" fill="#3c3c3c"/><circle cx="6.25" cy="9.25" r="0.55" fill="#3c3c3c"/><circle cx="7.75" cy="1.75" r="0.55" fill="#3c3c3c"/><circle cx="7.75" cy="3.25" r="0.55" fill="#3c3c3c"/><circle cx="7.75" cy="4.75" r="0.55" fill="#3c3c3c"/><circle cx="7.75" cy="6.25" r="0.55" fill="#3c3c3c"/><circle cx="7.75" cy="7.75" r="0.55" fill="#3c3c3c"/><circle cx="7.75" cy="9.25" r="0.55" fill="#3c3c3c"/><circle cx="9.25" cy="1.75" r="0.55" fill="#3c3c3c"/><circle cx="9.25" cy="3.25" r="0.55" fill="#3c3c3c"/><circle cx="9.25" cy="4.75" r="0.55" fill="#3c3c3c"/><circle cx="9.25" cy="6.25" r="0.55" fill="#3c3c3c"/><circle cx="9.25" cy="7.75" r="0.55" fill="#3c3c3c"/><circle cx="9.25" cy="9.25" r="0.55" fill="#3c3c3c"/></svg><svg style="left:1303px;top:383.5px;" width="11" height="11" viewBox="0 0 11 11"><rect x="0" y="0" width="11" height="11" fill="#e8e8e8"/><path d="M1 1H10L5.5 5.5Z" fill="#d418d4"/><path d="M1 1V10L5.5 5.5Z" fill="#20d0e0"/><path d="M10 1V10L5.5 5.5Z" fill="#e4e018"/><path d="M1 10H10L5.5 5.5Z" fill="#0a0a0a"/></svg><div style="left:1124px;top:418px;width:195px;height:1px;background:#3a3a3a;"></div><div style="left:1140px;top:402px;width:13px;height:13px;background:#000;border:1px solid #111;"></div><div class="t" style="left:1155.5px;top:402.8px;line-height:14px;font-size:9.5px;color:#e6e6e6;letter-spacing:-0.25px;">[Passermarken]</div><svg style="left:1271.5px;top:403px;" width="12" height="12" viewBox="0 0 12 12"><path d="M0.8 0.8L11 11" stroke="#d4d4d4" stroke-width="1.1"/><path d="M9.2 0.6L11.4 2.8L9.6 4.6L7.4 2.4Z" fill="#d4d4d4"/><path d="M6.8 3L9 5.2L3.2 10.6L0.8 11.4L1.6 8.8Z" fill="#d4d4d4" fill-opacity="0.55" stroke="#d4d4d4" stroke-width="0.9"/><circle cx="9.6" cy="2.4" r="1.7" fill="#d4d4d4"/></svg><svg style="left:1303px;top:403.5px;" width="11" height="11" viewBox="0 0 11 11"><rect x="0" y="0" width="11" height="11" fill="#d0d0d0"/><circle cx="5.5" cy="5.5" r="2.8" fill="none" stroke="#2a2a2a" stroke-width="0.9"/><path d="M5.5 1.2V9.8M1.2 5.5H9.8" stroke="#2a2a2a" stroke-width="0.8"/></svg><div style="left:1124px;top:438px;width:195px;height:1px;background:#3a3a3a;"></div><div style="left:1140px;top:422px;width:13px;height:13px;background:#050505;border:1px solid #111;"></div><div class="t" style="left:1155.5px;top:422.8px;line-height:14px;font-size:9.5px;color:#e6e6e6;letter-spacing:-0.25px;">c88m78y64k92</div><svg style="left:1287px;top:423.5px;" width="11" height="11" viewBox="0 0 11 11"><rect x="0" y="0" width="11" height="11" fill="#dcdcdc"/><rect x="1" y="1" width="9" height="9" fill="#b8b8b8"/><circle cx="1.75" cy="1.75" r="0.55" fill="#3c3c3c"/><circle cx="1.75" cy="3.25" r="0.55" fill="#3c3c3c"/><circle cx="1.75" cy="4.75" r="0.55" fill="#3c3c3c"/><circle cx="1.75" cy="6.25" r="0.55" fill="#3c3c3c"/><circle cx="1.75" cy="7.75" r="0.55" fill="#3c3c3c"/><circle cx="1.75" cy="9.25" r="0.55" fill="#3c3c3c"/><circle cx="3.25" cy="1.75" r="0.55" fill="#3c3c3c"/><circle cx="3.25" cy="3.25" r="0.55" fill="#3c3c3c"/><circle cx="3.25" cy="4.75" r="0.55" fill="#3c3c3c"/><circle cx="3.25" cy="6.25" r="0.55" fill="#3c3c3c"/><circle cx="3.25" cy="7.75" r="0.55" fill="#3c3c3c"/><circle cx="3.25" cy="9.25" r="0.55" fill="#3c3c3c"/><circle cx="4.75" cy="1.75" r="0.55" fill="#3c3c3c"/><circle cx="4.75" cy="3.25" r="0.55" fill="#3c3c3c"/><circle cx="4.75" cy="4.75" r="0.55" fill="#3c3c3c"/><circle cx="4.75" cy="6.25" r="0.55" fill="#3c3c3c"/><circle cx="4.75" cy="7.75" r="0.55" fill="#3c3c3c"/><circle cx="4.75" cy="9.25" r="0.55" fill="#3c3c3c"/><circle cx="6.25" cy="1.75" r="0.55" fill="#3c3c3c"/><circle cx="6.25" cy="3.25" r="0.55" fill="#3c3c3c"/><circle cx="6.25" cy="4.75" r="0.55" fill="#3c3c3c"/><circle cx="6.25" cy="6.25" r="0.55" fill="#3c3c3c"/><circle cx="6.25" cy="7.75" r="0.55" fill="#3c3c3c"/><circle cx="6.25" cy="9.25" r="0.55" fill="#3c3c3c"/><circle cx="7.75" cy="1.75" r="0.55" fill="#3c3c3c"/><circle cx="7.75" cy="3.25" r="0.55" fill="#3c3c3c"/><circle cx="7.75" cy="4.75" r="0.55" fill="#3c3c3c"/><circle cx="7.75" cy="6.25" r="0.55" fill="#3c3c3c"/><circle cx="7.75" cy="7.75" r="0.55" fill="#3c3c3c"/><circle cx="7.75" cy="9.25" r="0.55" fill="#3c3c3c"/><circle cx="9.25" cy="1.75" r="0.55" fill="#3c3c3c"/><circle cx="9.25" cy="3.25" r="0.55" fill="#3c3c3c"/><circle cx="9.25" cy="4.75" r="0.55" fill="#3c3c3c"/><circle cx="9.25" cy="6.25" r="0.55" fill="#3c3c3c"/><circle cx="9.25" cy="7.75" r="0.55" fill="#3c3c3c"/><circle cx="9.25" cy="9.25" r="0.55" fill="#3c3c3c"/></svg><svg style="left:1303px;top:423.5px;" width="11" height="11" viewBox="0 0 11 11"><rect x="0" y="0" width="11" height="11" fill="#e8e8e8"/><path d="M1 1H10L5.5 5.5Z" fill="#d418d4"/><path d="M1 1V10L5.5 5.5Z" fill="#20d0e0"/><path d="M10 1V10L5.5 5.5Z" fill="#e4e018"/><path d="M1 10H10L5.5 5.5Z" fill="#0a0a0a"/></svg><div style="left:1124px;top:458px;width:195px;height:1px;background:#3a3a3a;"></div><svg style="left:1126.5px;top:446.5px;" width="9" height="6" viewBox="0 0 9 6"><path d="M0 0H9L4.5 5.5Z" fill="#cfcfcf"/></svg><svg style="left:1138.5px;top:443.5px;" width="13" height="11" viewBox="0 0 13 11"><path d="M0.5 1.5Q0.5 0.5 1.5 0.5H5L6.5 2.2H11.5Q12.5 2.2 12.5 3.2V9.5Q12.5 10.5 11.5 10.5H1.5Q0.5 10.5 0.5 9.5Z" fill="#c8c8c8"/></svg><div class="t" style="left:1155.5px;top:442.8px;line-height:14px;font-size:9.5px;color:#e6e6e6;letter-spacing:-0.25px;">Corporate-Farbdesign</div><div style="left:1124px;top:478px;width:195px;height:1px;background:#3a3a3a;"></div><div style="left:1155.5px;top:462.5px;width:12.5px;height:12.5px;background:#428fa2;border:1px solid #111;"></div><div class="t" style="left:1170px;top:462.8px;line-height:14px;font-size:9.5px;color:#e6e6e6;letter-spacing:-0.25px;">C=78 M=12 Y=27 K=18</div><svg style="left:1287px;top:463.5px;" width="11" height="11" viewBox="0 0 11 11"><rect x="0" y="0" width="11" height="11" fill="#dcdcdc"/><rect x="1" y="1" width="9" height="9" fill="#b8b8b8"/><circle cx="1.75" cy="1.75" r="0.55" fill="#3c3c3c"/><circle cx="1.75" cy="3.25" r="0.55" fill="#3c3c3c"/><circle cx="1.75" cy="4.75" r="0.55" fill="#3c3c3c"/><circle cx="1.75" cy="6.25" r="0.55" fill="#3c3c3c"/><circle cx="1.75" cy="7.75" r="0.55" fill="#3c3c3c"/><circle cx="1.75" cy="9.25" r="0.55" fill="#3c3c3c"/><circle cx="3.25" cy="1.75" r="0.55" fill="#3c3c3c"/><circle cx="3.25" cy="3.25" r="0.55" fill="#3c3c3c"/><circle cx="3.25" cy="4.75" r="0.55" fill="#3c3c3c"/><circle cx="3.25" cy="6.25" r="0.55" fill="#3c3c3c"/><circle cx="3.25" cy="7.75" r="0.55" fill="#3c3c3c"/><circle cx="3.25" cy="9.25" r="0.55" fill="#3c3c3c"/><circle cx="4.75" cy="1.75" r="0.55" fill="#3c3c3c"/><circle cx="4.75" cy="3.25" r="0.55" fill="#3c3c3c"/><circle cx="4.75" cy="4.75" r="0.55" fill="#3c3c3c"/><circle cx="4.75" cy="6.25" r="0.55" fill="#3c3c3c"/><circle cx="4.75" cy="7.75" r="0.55" fill="#3c3c3c"/><circle cx="4.75" cy="9.25" r="0.55" fill="#3c3c3c"/><circle cx="6.25" cy="1.75" r="0.55" fill="#3c3c3c"/><circle cx="6.25" cy="3.25" r="0.55" fill="#3c3c3c"/><circle cx="6.25" cy="4.75" r="0.55" fill="#3c3c3c"/><circle cx="6.25" cy="6.25" r="0.55" fill="#3c3c3c"/><circle cx="6.25" cy="7.75" r="0.55" fill="#3c3c3c"/><circle cx="6.25" cy="9.25" r="0.55" fill="#3c3c3c"/><circle cx="7.75" cy="1.75" r="0.55" fill="#3c3c3c"/><circle cx="7.75" cy="3.25" r="0.55" fill="#3c3c3c"/><circle cx="7.75" cy="4.75" r="0.55" fill="#3c3c3c"/><circle cx="7.75" cy="6.25" r="0.55" fill="#3c3c3c"/><circle cx="7.75" cy="7.75" r="0.55" fill="#3c3c3c"/><circle cx="7.75" cy="9.25" r="0.55" fill="#3c3c3c"/><circle cx="9.25" cy="1.75" r="0.55" fill="#3c3c3c"/><circle cx="9.25" cy="3.25" r="0.55" fill="#3c3c3c"/><circle cx="9.25" cy="4.75" r="0.55" fill="#3c3c3c"/><circle cx="9.25" cy="6.25" r="0.55" fill="#3c3c3c"/><circle cx="9.25" cy="7.75" r="0.55" fill="#3c3c3c"/><circle cx="9.25" cy="9.25" r="0.55" fill="#3c3c3c"/></svg><svg style="left:1303px;top:463.5px;" width="11" height="11" viewBox="0 0 11 11"><rect x="0" y="0" width="11" height="11" fill="#e8e8e8"/><path d="M1 1H10L5.5 5.5Z" fill="#d418d4"/><path d="M1 1V10L5.5 5.5Z" fill="#20d0e0"/><path d="M10 1V10L5.5 5.5Z" fill="#e4e018"/><path d="M1 10H10L5.5 5.5Z" fill="#0a0a0a"/></svg><div style="left:1124px;top:498px;width:195px;height:1px;background:#3a3a3a;"></div><div style="left:1155.5px;top:482.5px;width:12.5px;height:12.5px;background:#52b9b9;border:1px solid #111;"></div><div class="t" style="left:1170px;top:482.8px;line-height:14px;font-size:9.5px;color:#e6e6e6;letter-spacing:-0.25px;">C=68 M=0 Y=33 K=0</div><svg style="left:1287px;top:483.5px;" width="11" height="11" viewBox="0 0 11 11"><rect x="0" y="0" width="11" height="11" fill="#dcdcdc"/><rect x="1" y="1" width="9" height="9" fill="#b8b8b8"/><circle cx="1.75" cy="1.75" r="0.55" fill="#3c3c3c"/><circle cx="1.75" cy="3.25" r="0.55" fill="#3c3c3c"/><circle cx="1.75" cy="4.75" r="0.55" fill="#3c3c3c"/><circle cx="1.75" cy="6.25" r="0.55" fill="#3c3c3c"/><circle cx="1.75" cy="7.75" r="0.55" fill="#3c3c3c"/><circle cx="1.75" cy="9.25" r="0.55" fill="#3c3c3c"/><circle cx="3.25" cy="1.75" r="0.55" fill="#3c3c3c"/><circle cx="3.25" cy="3.25" r="0.55" fill="#3c3c3c"/><circle cx="3.25" cy="4.75" r="0.55" fill="#3c3c3c"/><circle cx="3.25" cy="6.25" r="0.55" fill="#3c3c3c"/><circle cx="3.25" cy="7.75" r="0.55" fill="#3c3c3c"/><circle cx="3.25" cy="9.25" r="0.55" fill="#3c3c3c"/><circle cx="4.75" cy="1.75" r="0.55" fill="#3c3c3c"/><circle cx="4.75" cy="3.25" r="0.55" fill="#3c3c3c"/><circle cx="4.75" cy="4.75" r="0.55" fill="#3c3c3c"/><circle cx="4.75" cy="6.25" r="0.55" fill="#3c3c3c"/><circle cx="4.75" cy="7.75" r="0.55" fill="#3c3c3c"/><circle cx="4.75" cy="9.25" r="0.55" fill="#3c3c3c"/><circle cx="6.25" cy="1.75" r="0.55" fill="#3c3c3c"/><circle cx="6.25" cy="3.25" r="0.55" fill="#3c3c3c"/><circle cx="6.25" cy="4.75" r="0.55" fill="#3c3c3c"/><circle cx="6.25" cy="6.25" r="0.55" fill="#3c3c3c"/><circle cx="6.25" cy="7.75" r="0.55" fill="#3c3c3c"/><circle cx="6.25" cy="9.25" r="0.55" fill="#3c3c3c"/><circle cx="7.75" cy="1.75" r="0.55" fill="#3c3c3c"/><circle cx="7.75" cy="3.25" r="0.55" fill="#3c3c3c"/><circle cx="7.75" cy="4.75" r="0.55" fill="#3c3c3c"/><circle cx="7.75" cy="6.25" r="0.55" fill="#3c3c3c"/><circle cx="7.75" cy="7.75" r="0.55" fill="#3c3c3c"/><circle cx="7.75" cy="9.25" r="0.55" fill="#3c3c3c"/><circle cx="9.25" cy="1.75" r="0.55" fill="#3c3c3c"/><circle cx="9.25" cy="3.25" r="0.55" fill="#3c3c3c"/><circle cx="9.25" cy="4.75" r="0.55" fill="#3c3c3c"/><circle cx="9.25" cy="6.25" r="0.55" fill="#3c3c3c"/><circle cx="9.25" cy="7.75" r="0.55" fill="#3c3c3c"/><circle cx="9.25" cy="9.25" r="0.55" fill="#3c3c3c"/></svg><svg style="left:1303px;top:483.5px;" width="11" height="11" viewBox="0 0 11 11"><rect x="0" y="0" width="11" height="11" fill="#e8e8e8"/><path d="M1 1H10L5.5 5.5Z" fill="#d418d4"/><path d="M1 1V10L5.5 5.5Z" fill="#20d0e0"/><path d="M10 1V10L5.5 5.5Z" fill="#e4e018"/><path d="M1 10H10L5.5 5.5Z" fill="#0a0a0a"/></svg><div style="left:1124px;top:518px;width:195px;height:1px;background:#3a3a3a;"></div><div style="left:1155.5px;top:502.5px;width:12.5px;height:12.5px;background:#f2f0ea;border:1px solid #111;"></div><div class="t" style="left:1170px;top:502.8px;line-height:14px;font-size:9.5px;color:#e6e6e6;letter-spacing:-0.25px;">C=6 M=5 Y=9 K=0</div><svg style="left:1287px;top:503.5px;" width="11" height="11" viewBox="0 0 11 11"><rect x="0" y="0" width="11" height="11" fill="#dcdcdc"/><rect x="1" y="1" width="9" height="9" fill="#b8b8b8"/><circle cx="1.75" cy="1.75" r="0.55" fill="#3c3c3c"/><circle cx="1.75" cy="3.25" r="0.55" fill="#3c3c3c"/><circle cx="1.75" cy="4.75" r="0.55" fill="#3c3c3c"/><circle cx="1.75" cy="6.25" r="0.55" fill="#3c3c3c"/><circle cx="1.75" cy="7.75" r="0.55" fill="#3c3c3c"/><circle cx="1.75" cy="9.25" r="0.55" fill="#3c3c3c"/><circle cx="3.25" cy="1.75" r="0.55" fill="#3c3c3c"/><circle cx="3.25" cy="3.25" r="0.55" fill="#3c3c3c"/><circle cx="3.25" cy="4.75" r="0.55" fill="#3c3c3c"/><circle cx="3.25" cy="6.25" r="0.55" fill="#3c3c3c"/><circle cx="3.25" cy="7.75" r="0.55" fill="#3c3c3c"/><circle cx="3.25" cy="9.25" r="0.55" fill="#3c3c3c"/><circle cx="4.75" cy="1.75" r="0.55" fill="#3c3c3c"/><circle cx="4.75" cy="3.25" r="0.55" fill="#3c3c3c"/><circle cx="4.75" cy="4.75" r="0.55" fill="#3c3c3c"/><circle cx="4.75" cy="6.25" r="0.55" fill="#3c3c3c"/><circle cx="4.75" cy="7.75" r="0.55" fill="#3c3c3c"/><circle cx="4.75" cy="9.25" r="0.55" fill="#3c3c3c"/><circle cx="6.25" cy="1.75" r="0.55" fill="#3c3c3c"/><circle cx="6.25" cy="3.25" r="0.55" fill="#3c3c3c"/><circle cx="6.25" cy="4.75" r="0.55" fill="#3c3c3c"/><circle cx="6.25" cy="6.25" r="0.55" fill="#3c3c3c"/><circle cx="6.25" cy="7.75" r="0.55" fill="#3c3c3c"/><circle cx="6.25" cy="9.25" r="0.55" fill="#3c3c3c"/><circle cx="7.75" cy="1.75" r="0.55" fill="#3c3c3c"/><circle cx="7.75" cy="3.25" r="0.55" fill="#3c3c3c"/><circle cx="7.75" cy="4.75" r="0.55" fill="#3c3c3c"/><circle cx="7.75" cy="6.25" r="0.55" fill="#3c3c3c"/><circle cx="7.75" cy="7.75" r="0.55" fill="#3c3c3c"/><circle cx="7.75" cy="9.25" r="0.55" fill="#3c3c3c"/><circle cx="9.25" cy="1.75" r="0.55" fill="#3c3c3c"/><circle cx="9.25" cy="3.25" r="0.55" fill="#3c3c3c"/><circle cx="9.25" cy="4.75" r="0.55" fill="#3c3c3c"/><circle cx="9.25" cy="6.25" r="0.55" fill="#3c3c3c"/><circle cx="9.25" cy="7.75" r="0.55" fill="#3c3c3c"/><circle cx="9.25" cy="9.25" r="0.55" fill="#3c3c3c"/></svg><svg style="left:1303px;top:503.5px;" width="11" height="11" viewBox="0 0 11 11"><rect x="0" y="0" width="11" height="11" fill="#e8e8e8"/><path d="M1 1H10L5.5 5.5Z" fill="#d418d4"/><path d="M1 1V10L5.5 5.5Z" fill="#20d0e0"/><path d="M10 1V10L5.5 5.5Z" fill="#e4e018"/><path d="M1 10H10L5.5 5.5Z" fill="#0a0a0a"/></svg><div style="left:1124px;top:538px;width:195px;height:1px;background:#3a3a3a;"></div><div style="left:1155.5px;top:522.5px;width:12.5px;height:12.5px;background:#ef7b57;border:1px solid #111;"></div><div class="t" style="left:1170px;top:522.8px;line-height:14px;font-size:9.5px;color:#e6e6e6;letter-spacing:-0.25px;">C=0 M=62 Y=64 K=0</div><svg style="left:1287px;top:523.5px;" width="11" height="11" viewBox="0 0 11 11"><rect x="0" y="0" width="11" height="11" fill="#dcdcdc"/><rect x="1" y="1" width="9" height="9" fill="#b8b8b8"/><circle cx="1.75" cy="1.75" r="0.55" fill="#3c3c3c"/><circle cx="1.75" cy="3.25" r="0.55" fill="#3c3c3c"/><circle cx="1.75" cy="4.75" r="0.55" fill="#3c3c3c"/><circle cx="1.75" cy="6.25" r="0.55" fill="#3c3c3c"/><circle cx="1.75" cy="7.75" r="0.55" fill="#3c3c3c"/><circle cx="1.75" cy="9.25" r="0.55" fill="#3c3c3c"/><circle cx="3.25" cy="1.75" r="0.55" fill="#3c3c3c"/><circle cx="3.25" cy="3.25" r="0.55" fill="#3c3c3c"/><circle cx="3.25" cy="4.75" r="0.55" fill="#3c3c3c"/><circle cx="3.25" cy="6.25" r="0.55" fill="#3c3c3c"/><circle cx="3.25" cy="7.75" r="0.55" fill="#3c3c3c"/><circle cx="3.25" cy="9.25" r="0.55" fill="#3c3c3c"/><circle cx="4.75" cy="1.75" r="0.55" fill="#3c3c3c"/><circle cx="4.75" cy="3.25" r="0.55" fill="#3c3c3c"/><circle cx="4.75" cy="4.75" r="0.55" fill="#3c3c3c"/><circle cx="4.75" cy="6.25" r="0.55" fill="#3c3c3c"/><circle cx="4.75" cy="7.75" r="0.55" fill="#3c3c3c"/><circle cx="4.75" cy="9.25" r="0.55" fill="#3c3c3c"/><circle cx="6.25" cy="1.75" r="0.55" fill="#3c3c3c"/><circle cx="6.25" cy="3.25" r="0.55" fill="#3c3c3c"/><circle cx="6.25" cy="4.75" r="0.55" fill="#3c3c3c"/><circle cx="6.25" cy="6.25" r="0.55" fill="#3c3c3c"/><circle cx="6.25" cy="7.75" r="0.55" fill="#3c3c3c"/><circle cx="6.25" cy="9.25" r="0.55" fill="#3c3c3c"/><circle cx="7.75" cy="1.75" r="0.55" fill="#3c3c3c"/><circle cx="7.75" cy="3.25" r="0.55" fill="#3c3c3c"/><circle cx="7.75" cy="4.75" r="0.55" fill="#3c3c3c"/><circle cx="7.75" cy="6.25" r="0.55" fill="#3c3c3c"/><circle cx="7.75" cy="7.75" r="0.55" fill="#3c3c3c"/><circle cx="7.75" cy="9.25" r="0.55" fill="#3c3c3c"/><circle cx="9.25" cy="1.75" r="0.55" fill="#3c3c3c"/><circle cx="9.25" cy="3.25" r="0.55" fill="#3c3c3c"/><circle cx="9.25" cy="4.75" r="0.55" fill="#3c3c3c"/><circle cx="9.25" cy="6.25" r="0.55" fill="#3c3c3c"/><circle cx="9.25" cy="7.75" r="0.55" fill="#3c3c3c"/><circle cx="9.25" cy="9.25" r="0.55" fill="#3c3c3c"/></svg><svg style="left:1303px;top:523.5px;" width="11" height="11" viewBox="0 0 11 11"><rect x="0" y="0" width="11" height="11" fill="#e8e8e8"/><path d="M1 1H10L5.5 5.5Z" fill="#d418d4"/><path d="M1 1V10L5.5 5.5Z" fill="#20d0e0"/><path d="M10 1V10L5.5 5.5Z" fill="#e4e018"/><path d="M1 10H10L5.5 5.5Z" fill="#0a0a0a"/></svg><div style="left:1124px;top:558px;width:195px;height:1px;background:#3a3a3a;"></div><div style="left:1155.5px;top:542.5px;width:12.5px;height:12.5px;background:#e8472a;border:1px solid #111;"></div><div class="t" style="left:1170px;top:542.8px;line-height:14px;font-size:9.5px;color:#e6e6e6;letter-spacing:-0.25px;">C=0 M=84 Y=90 K=0</div><svg style="left:1287px;top:543.5px;" width="11" height="11" viewBox="0 0 11 11"><rect x="0" y="0" width="11" height="11" fill="#dcdcdc"/><rect x="1" y="1" width="9" height="9" fill="#b8b8b8"/><circle cx="1.75" cy="1.75" r="0.55" fill="#3c3c3c"/><circle cx="1.75" cy="3.25" r="0.55" fill="#3c3c3c"/><circle cx="1.75" cy="4.75" r="0.55" fill="#3c3c3c"/><circle cx="1.75" cy="6.25" r="0.55" fill="#3c3c3c"/><circle cx="1.75" cy="7.75" r="0.55" fill="#3c3c3c"/><circle cx="1.75" cy="9.25" r="0.55" fill="#3c3c3c"/><circle cx="3.25" cy="1.75" r="0.55" fill="#3c3c3c"/><circle cx="3.25" cy="3.25" r="0.55" fill="#3c3c3c"/><circle cx="3.25" cy="4.75" r="0.55" fill="#3c3c3c"/><circle cx="3.25" cy="6.25" r="0.55" fill="#3c3c3c"/><circle cx="3.25" cy="7.75" r="0.55" fill="#3c3c3c"/><circle cx="3.25" cy="9.25" r="0.55" fill="#3c3c3c"/><circle cx="4.75" cy="1.75" r="0.55" fill="#3c3c3c"/><circle cx="4.75" cy="3.25" r="0.55" fill="#3c3c3c"/><circle cx="4.75" cy="4.75" r="0.55" fill="#3c3c3c"/><circle cx="4.75" cy="6.25" r="0.55" fill="#3c3c3c"/><circle cx="4.75" cy="7.75" r="0.55" fill="#3c3c3c"/><circle cx="4.75" cy="9.25" r="0.55" fill="#3c3c3c"/><circle cx="6.25" cy="1.75" r="0.55" fill="#3c3c3c"/><circle cx="6.25" cy="3.25" r="0.55" fill="#3c3c3c"/><circle cx="6.25" cy="4.75" r="0.55" fill="#3c3c3c"/><circle cx="6.25" cy="6.25" r="0.55" fill="#3c3c3c"/><circle cx="6.25" cy="7.75" r="0.55" fill="#3c3c3c"/><circle cx="6.25" cy="9.25" r="0.55" fill="#3c3c3c"/><circle cx="7.75" cy="1.75" r="0.55" fill="#3c3c3c"/><circle cx="7.75" cy="3.25" r="0.55" fill="#3c3c3c"/><circle cx="7.75" cy="4.75" r="0.55" fill="#3c3c3c"/><circle cx="7.75" cy="6.25" r="0.55" fill="#3c3c3c"/><circle cx="7.75" cy="7.75" r="0.55" fill="#3c3c3c"/><circle cx="7.75" cy="9.25" r="0.55" fill="#3c3c3c"/><circle cx="9.25" cy="1.75" r="0.55" fill="#3c3c3c"/><circle cx="9.25" cy="3.25" r="0.55" fill="#3c3c3c"/><circle cx="9.25" cy="4.75" r="0.55" fill="#3c3c3c"/><circle cx="9.25" cy="6.25" r="0.55" fill="#3c3c3c"/><circle cx="9.25" cy="7.75" r="0.55" fill="#3c3c3c"/><circle cx="9.25" cy="9.25" r="0.55" fill="#3c3c3c"/></svg><svg style="left:1303px;top:543.5px;" width="11" height="11" viewBox="0 0 11 11"><rect x="0" y="0" width="11" height="11" fill="#e8e8e8"/><path d="M1 1H10L5.5 5.5Z" fill="#d418d4"/><path d="M1 1V10L5.5 5.5Z" fill="#20d0e0"/><path d="M10 1V10L5.5 5.5Z" fill="#e4e018"/><path d="M1 10H10L5.5 5.5Z" fill="#0a0a0a"/></svg><div style="left:1319px;top:339px;width:14px;height:220px;background:#343434;"></div><svg style="left:1321.5px;top:343.5px;" width="9" height="5" viewBox="0 0 9 5"><path d="M0 5H9L4.5 0Z" fill="#7a7a7a"/></svg><svg style="left:1321.5px;top:549px;" width="9" height="5" viewBox="0 0 9 5"><path d="M0 0H9L4.5 5Z" fill="#7a7a7a"/></svg><div style="left:1124px;top:559px;width:209px;height:1px;background:#2b2b2b;"></div><svg style="left:1202.8px;top:564.3px;" width="15" height="11" viewBox="0 0 15 11"><rect x="0" y="0" width="10.5" height="9.5" fill="#d4d4d4"/><rect x="2.35" y="0" width="0.6" height="9.5" fill="#4a4a4a"/><rect x="0" y="2.15" width="10.5" height="0.6" fill="#4a4a4a"/><rect x="4.95" y="0" width="0.6" height="9.5" fill="#4a4a4a"/><rect x="0" y="4.55" width="10.5" height="0.6" fill="#4a4a4a"/><rect x="7.55" y="0" width="0.6" height="9.5" fill="#4a4a4a"/><rect x="0" y="6.95" width="10.5" height="0.6" fill="#4a4a4a"/><rect x="5.20" y="2.40" width="2.6" height="2.4" fill="#1e1e1e"/><rect x="7.80" y="4.80" width="2.6" height="2.4" fill="#1e1e1e"/><rect x="2.60" y="7.20" width="2.6" height="2.4" fill="#1e1e1e"/><path d="M11.2 8H15L13.1 10.5Z" fill="#d0d0d0"/></svg><svg style="left:1235px;top:563.5px;" width="13" height="11" viewBox="0 0 13 11"><path d="M0.5 1.5Q0.5 0.5 1.5 0.5H5L6.5 2.2H11.5Q12.5 2.2 12.5 3.2V9.5Q12.5 10.5 11.5 10.5H1.5Q0.5 10.5 0.5 9.5Z" fill="#c0c0c0"/></svg><svg style="left:1266px;top:564px;" width="11" height="11" viewBox="0 0 11 11"><path d="M0 0H10.5V10.5H4.5V5.5H0Z" fill="#7c7c7c"/><path d="M0.4 6H4V10Z" fill="#7c7c7c" opacity="0.85"/></svg><svg style="left:1295px;top:563px;" width="11" height="12" viewBox="0 0 11 12"><path d="M0.5 2.5H10.5M4 2.2V0.8H7V2.2" fill="none" stroke="#7c7c7c" stroke-width="1.1"/><path d="M1.5 4H9.5L8.8 11.5H2.2Z" fill="none" stroke="#7c7c7c" stroke-width="1"/><path d="M3.8 5V10.5M5.5 5V10.5M7.2 5V10.5" stroke="#7c7c7c" stroke-width="0.9"/></svg><svg style="left:1321px;top:566px;shape-rendering:crispEdges;" width="10" height="10" viewBox="0 0 10 10"><rect x="8" y="0" width="1" height="1" fill="#222"/><rect x="8" y="2" width="1" height="1" fill="#222"/><rect x="6" y="2" width="1" height="1" fill="#222"/><rect x="8" y="4" width="1" height="1" fill="#222"/><rect x="6" y="4" width="1" height="1" fill="#222"/><rect x="4" y="4" width="1" height="1" fill="#222"/><rect x="8" y="6" width="1" height="1" fill="#222"/><rect x="6" y="6" width="1" height="1" fill="#222"/><rect x="4" y="6" width="1" height="1" fill="#222"/><rect x="2" y="6" width="1" height="1" fill="#222"/><rect x="8" y="8" width="1" height="1" fill="#222"/><rect x="6" y="8" width="1" height="1" fill="#222"/><rect x="4" y="8" width="1" height="1" fill="#222"/><rect x="2" y="8" width="1" height="1" fill="#222"/><rect x="0" y="8" width="1" height="1" fill="#222"/></svg><div style="left:1124px;top:579px;width:209px;height:1px;background:#2b2b2b;"></div><div style="left:1219px;top:581px;width:19px;height:4px;background:repeating-linear-gradient(90deg,#1c1c1c 0 1px,transparent 1px 2px);"></div>
<svg style="left:50px;top:969px;" width="20" height="11" viewBox="0 0 20 11"><rect x="0.5" y="0.5" width="19" height="10" rx="2" fill="#c4c4c4"/><circle cx="5.5" cy="5.5" r="2.6" fill="none" stroke="#2c2c2c" stroke-width="2" stroke-dasharray="1.3 0.8"/><path d="M11 4H16M14 2L16.5 4L14 6M17 7.5H12M14 5.5L11.5 7.5L14 9.5" fill="none" stroke="#2c2c2c" stroke-width="1.1"/></svg><svg style="left:77px;top:968.5px;" width="14" height="12" viewBox="0 0 14 12"><path d="M5 2.5H0.8V11H10.5V7.5" fill="none" stroke="#d4d4d4" stroke-width="1.5"/><path d="M4 8.5C4 5 6.5 3.5 9 3.5V1L13.5 4.8L9 8.5V6C7 6 5.2 6.8 4 8.5Z" fill="#d4d4d4"/></svg><svg style="left:100px;top:970.5px;" width="9" height="8" viewBox="0 0 9 8"><rect x="0" y="0" width="1.4" height="8" fill="#8a8a8a"/><path d="M8.5 0V8L2.5 4Z" fill="#8a8a8a"/></svg><svg style="left:115px;top:970.5px;" width="7" height="8" viewBox="0 0 7 8"><path d="M6.5 0V8L0.5 4Z" fill="#8a8a8a"/></svg><div class="t" style="left:131.5px;top:968.0px;line-height:14px;font-size:9.5px;color:#e6e6e6;letter-spacing:-0.25px;">1</div><svg style="left:214px;top:972.5px;" width="8" height="5" viewBox="0 0 8 5"><path d="M0 0H8L4 5Z" fill="#dcdcdc"/></svg><svg style="left:231.5px;top:970.5px;" width="7" height="8" viewBox="0 0 7 8"><path d="M0.5 0V8L6.5 4Z" fill="#8a8a8a"/></svg><svg style="left:245px;top:970.5px;" width="9" height="8" viewBox="0 0 9 8"><path d="M0.5 0V8L6.5 4Z" fill="#8a8a8a"/><rect x="7.2" y="0" width="1.4" height="8" fill="#8a8a8a"/></svg><svg style="left:260px;top:968.5px;" width="17" height="12" viewBox="0 0 17 12"><circle cx="6" cy="6" r="5.2" fill="none" stroke="#d8d8d8" stroke-width="1.2"/><path d="M3.8 3H6.5L8.3 4.8V9H3.8Z" fill="#d8d8d8"/><path d="M12.5 9.5H16L14.2 11.8Z" fill="#d0d0d0"/></svg><div class="t" style="left:286px;top:967.5px;line-height:14px;font-size:9.5px;color:#787878;letter-spacing:-0.25px;">[Grundprofil] (Arbeitsp...</div><svg style="left:391px;top:972.5px;" width="7.5" height="5" viewBox="0 0 7.5 5"><path d="M0 0H7.5L3.75 5Z" fill="#787878"/></svg><div style="left:406px;top:969.5px;width:10.5px;height:10.5px;border-radius:50%;background:radial-gradient(circle at 40% 35%,#7a7a7a,#585858);"></div><div class="t" style="left:420.5px;top:967.5px;line-height:14px;font-size:9.5px;color:#e6e6e6;letter-spacing:-0.25px;">Preflight aus</div><svg style="left:491.5px;top:973px;" width="6" height="4" viewBox="0 0 6 4"><path d="M0 0H6L3 4Z" fill="#dcdcdc"/></svg><div style="left:500.5px;top:966px;width:1px;height:17px;background:#2a2a2a;"></div><svg style="left:506.5px;top:970.5px;" width="6" height="8" viewBox="0 0 6 8"><path d="M5.5 0V8L0 4Z" fill="#e4e4e4"/></svg><div style="left:928px;top:967px;width:109px;height:14.5px;background:#8c8c8c;"></div><div style="left:1656px;top:967px;width:17px;height:16px;background:#2b2b2b;"></div><svg style="left:1660px;top:970.5px;" width="6" height="8" viewBox="0 0 6 8"><path d="M0 0V8L5.5 4Z" fill="#e4e4e4"/></svg><svg style="left:1676px;top:969px;" width="17" height="12" viewBox="0 0 17 12"><rect x="0.7" y="0.7" width="15" height="10" fill="#2a2a2a" stroke="#e0e0e0" stroke-width="1.4"/><path d="M8.2 0.7V10.7" stroke="#e0e0e0" stroke-width="1.4"/></svg><svg style="left:1697px;top:970px;shape-rendering:crispEdges;" width="10" height="10" viewBox="0 0 10 10"><rect x="8" y="0" width="1" height="1" fill="#9a9a9a"/><rect x="8" y="2" width="1" height="1" fill="#9a9a9a"/><rect x="6" y="2" width="1" height="1" fill="#9a9a9a"/><rect x="8" y="4" width="1" height="1" fill="#9a9a9a"/><rect x="6" y="4" width="1" height="1" fill="#9a9a9a"/><rect x="4" y="4" width="1" height="1" fill="#9a9a9a"/><rect x="8" y="6" width="1" height="1" fill="#9a9a9a"/><rect x="6" y="6" width="1" height="1" fill="#9a9a9a"/><rect x="4" y="6" width="1" height="1" fill="#9a9a9a"/><rect x="2" y="6" width="1" height="1" fill="#9a9a9a"/><rect x="8" y="8" width="1" height="1" fill="#9a9a9a"/><rect x="6" y="8" width="1" height="1" fill="#9a9a9a"/><rect x="4" y="8" width="1" height="1" fill="#9a9a9a"/><rect x="2" y="8" width="1" height="1" fill="#9a9a9a"/><rect x="0" y="8" width="1" height="1" fill="#9a9a9a"/></svg></body></html>
